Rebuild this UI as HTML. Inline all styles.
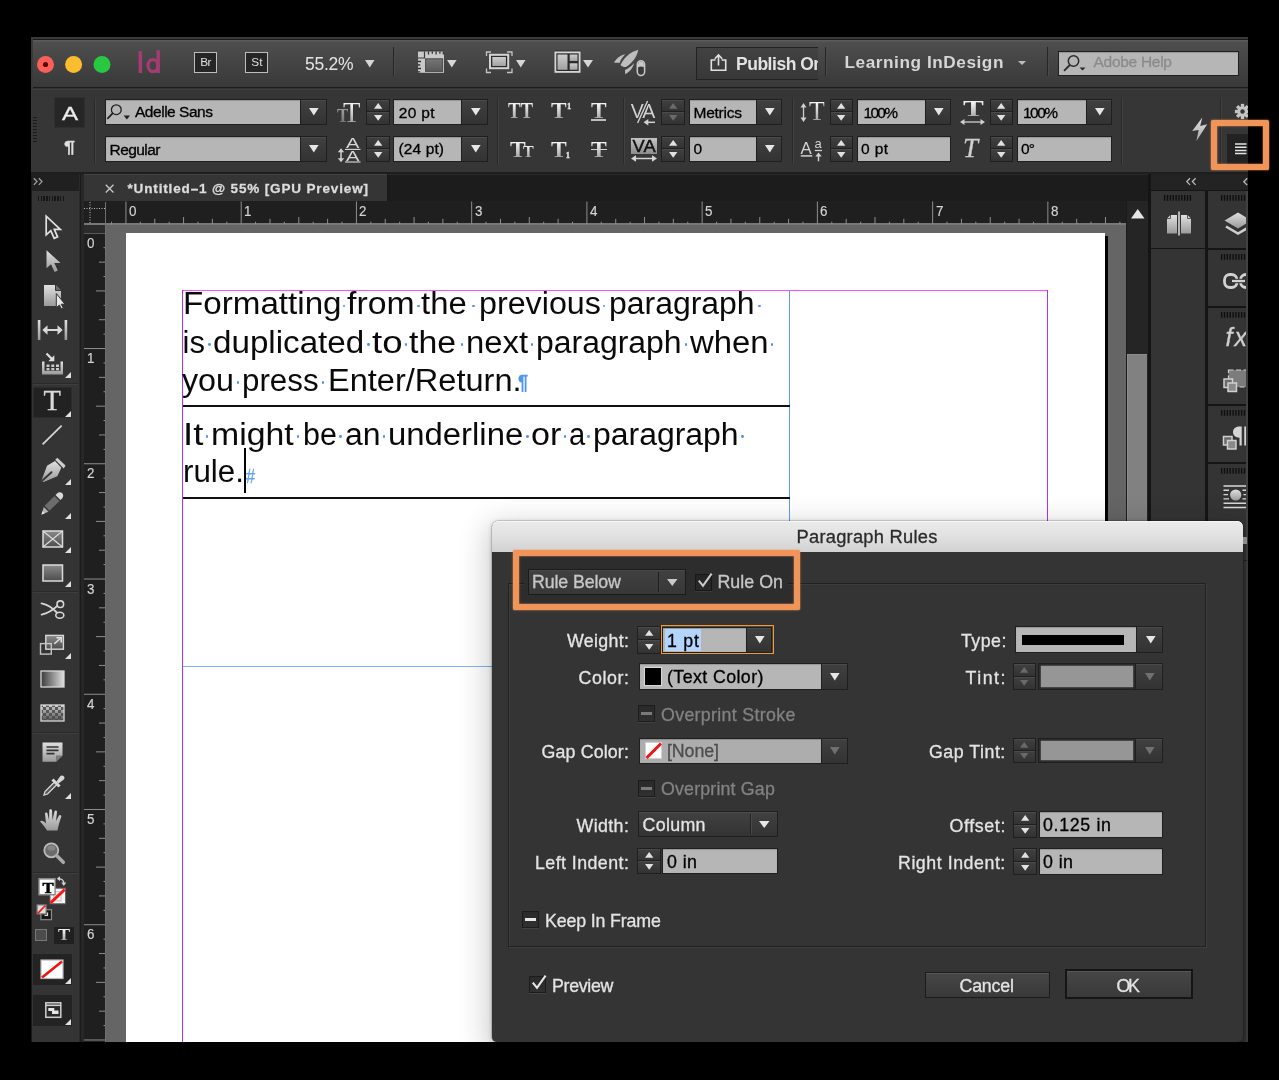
<!DOCTYPE html><html><head><meta charset="utf-8"><title>InDesign</title><style>html,body{margin:0;padding:0}body{width:1279px;height:1080px;background:#000;position:relative;overflow:hidden;font-family:"Liberation Sans",sans-serif;}div,span,svg{position:absolute;display:block}svg{overflow:visible}span{-webkit-text-stroke:0.300px}</style></head><body><div id="root" style="left:0;top:0;width:1279px;height:1080px;will-change:transform;"><div style="left:31px;top:37px;width:1217px;height:1005.4px;background:#333333;"></div><div style="left:31px;top:36.8px;width:1217px;height:51.2px;background:linear-gradient(#3a3a3a 0,#3a3a3a 1.700px,#1c1c1c 1.700px,#1c1c1c 3.400px,#5c5c5c 3.400px,#4e4e4e 5.400px,#444444 50%,#383838 100%);"></div><div style="left:31px;top:36.8px;width:1.7px;height:51.2px;background:#3a3a3a;"></div><div style="left:32.7px;top:86.7px;width:1215.3px;height:1.8px;background:#1c1c1c;"></div><svg style="left:34px;top:52px;" width="82" height="26" viewBox="0 0 82 26"><circle cx="11.5" cy="12.5" r="8.5" fill="#fc5f58"/><circle cx="11.5" cy="12.5" r="2.6" fill="#5a0805"/><circle cx="39.6" cy="12.5" r="8.5" fill="#fdbc2e"/><circle cx="68" cy="12.5" r="8.5" fill="#28c840"/></svg><svg style="left:136px;top:46.7px;" width="28" height="30" viewBox="0 0 28 30"><rect x="2.6" y="4" width="3.5" height="22" fill="#a63a72"/><rect x="20.4" y="3.2" width="3.5" height="22.8" fill="#a63a72"/><ellipse cx="17" cy="18.6" rx="5" ry="6" fill="none" stroke="#a63a72" stroke-width="3.3"/></svg><div style="left:194px;top:52px;width:23px;height:21px;background:#262626;border:1px solid #bdbdbd;box-sizing:border-box;"></div><span style="left:200.3px;top:57.31px;font-size:11.8px;line-height:11.8px;color:#e0e0e0;white-space:pre;letter-spacing:-0.6px;-webkit-text-stroke:0;">Br</span><div style="left:245px;top:52px;width:23px;height:21px;background:#262626;border:1px solid #bdbdbd;box-sizing:border-box;"></div><span style="left:251.3px;top:57.31px;font-size:11.8px;line-height:11.8px;color:#e0e0e0;white-space:pre;letter-spacing:0.05px;-webkit-text-stroke:0;">St</span><span style="left:305px;top:55.99px;font-size:17.5px;line-height:17.5px;color:#e4e4e4;white-space:pre;letter-spacing:-0.28px;-webkit-text-stroke:0;">55.2%</span><svg style="left:365px;top:59.5px;" width="9.5" height="7.5" viewBox="0 0 9.5 7.5"><path d="M0 0H9.5 L4.75 7.5Z" fill="#d6d6d6"/></svg><div style="left:393px;top:47px;width:1px;height:29px;background:#262626;"></div><div style="left:394px;top:47px;width:1px;height:29px;background:#4a4a4a;"></div><svg style="left:417px;top:50px;" width="28" height="24" viewBox="0 0 28 24"><defs><linearGradient id="gA" x1="0" y1="0" x2="0" y2="1"><stop offset="0" stop-color="#767676"/><stop offset="1" stop-color="#595959"/></linearGradient><linearGradient id="gB" x1="0" y1="0" x2="0" y2="1"><stop offset="0" stop-color="#cdcdcd"/><stop offset="1" stop-color="#a2a2a2"/></linearGradient></defs><rect x="1" y="0.500" width="26" height="1" fill="#2c2c2c"/><rect x="1" y="1.500" width="26" height="21.300" fill="#c9c9c9"/><rect x="8.600" y="8.800" width="17" height="12.600" fill="url(#gA)" stroke="#4a4a4a" stroke-width="1"/><path d="M1 8h6.500V1.500" fill="none" stroke="#3a3a3a" stroke-width="1.200"/><path d="M11.500 1.500v3M15.300 1.500v2.200M19.100 1.500v3M22.900 1.500v2.200M26.300 1.500v3" stroke="#333" stroke-width="1.300"/><path d="M1 11.500h3M1 15h2.200M1 18.500h3M1 21.800h2.200" stroke="#333" stroke-width="1.300"/></svg><svg style="left:447px;top:59.5px;" width="9.6" height="7.5" viewBox="0 0 9.6 7.5"><path d="M0 0H9.6 L4.8 7.5Z" fill="#d6d6d6"/></svg><svg style="left:485px;top:50px;" width="29" height="24" viewBox="0 0 29 24"><path d="M1.500 6V2H6M22 2h5V6M27 18.500v4H22M6 22.500H1.500v-4" fill="none" stroke="#c4c4c4" stroke-width="1.300"/><rect x="4" y="3.800" width="20.200" height="15.400" fill="#d4d4d4"/><rect x="6" y="5.800" width="16.200" height="11.400" fill="#2b2b2b"/><rect x="7.300" y="7" width="13.600" height="9" fill="url(#gB)"/></svg><svg style="left:515.5px;top:59.5px;" width="9.5" height="7.5" viewBox="0 0 9.5 7.5"><path d="M0 0H9.5 L4.75 7.5Z" fill="#d6d6d6"/></svg><svg style="left:553.5px;top:50px;" width="27" height="24" viewBox="0 0 27 24"><rect x="0.500" y="0.500" width="26" height="1" fill="#2c2c2c"/><rect x="0.500" y="1.500" width="26" height="21.300" fill="#d6d6d6"/><rect x="2.300" y="3.300" width="22.400" height="17.700" fill="#2b2b2b"/><rect x="3.500" y="4.500" width="10" height="15.300" fill="url(#gB)"/><rect x="15.700" y="4.500" width="7.800" height="6.500" fill="url(#gB)"/><rect x="15.700" y="13.300" width="7.800" height="6.500" fill="url(#gB)"/></svg><svg style="left:582.5px;top:59.5px;" width="10" height="7.5" viewBox="0 0 10 7.5"><path d="M0 0H10 L5 7.5Z" fill="#d6d6d6"/></svg><svg style="left:612px;top:48px;" width="36" height="30" viewBox="0 0 36 30"><g fill="#bdbdbd"><path d="M26.200 1.800C19 4 12.500 8.500 8.500 17C10 18.500 12 19.200 14 19C20 15.500 25 9 26.200 1.800Z"/><path d="M2 14.800C4 11 7.500 7.500 13.200 6.200C10.500 9 8.500 12 7.500 15C5.500 14.600 3.500 14.600 2 14.800Z"/><path d="M13 22L13.200 26.300C17.500 24 21 20 22.200 15C19.500 18 16.500 20.500 13 22Z"/></g><rect x="25.300" y="12.700" width="7.300" height="14.800" rx="3.650" fill="#3a3a3a" stroke="#c8c8c8" stroke-width="1.500"/><path d="M26 19.300V16.400a2.950 2.950 0 0 1 5.900 0V19.300Q29 17.800 26 19.300Z" fill="#c8c8c8"/></svg><div style="left:696px;top:47px;width:121.5px;height:32.5px;background:linear-gradient(#424242,#383838);border:1px solid #222;border-right:none;box-sizing:border-box;overflow:hidden;"></div><svg style="left:708.5px;top:52px;" width="20" height="20" viewBox="0 0 20 20"><path d="M6.500 8H2.300v10.300h14.400V8h-4.200" fill="none" stroke="#e2e2e2" stroke-width="1.600"/><path d="M9.500 13.500V3.500M5.800 6.800L9.500 3l3.700 3.800" fill="none" stroke="#e2e2e2" stroke-width="1.600"/></svg><div style="left:736px;top:47px;width:81.500px;height:32.500px;overflow:hidden;"><span style="left:0px;top:9.19px;font-size:17.5px;line-height:17.5px;color:#e2e2e2;white-space:pre;font-weight:bold;letter-spacing:-0.48px;-webkit-text-stroke:0;">Publish On</span></div><div style="left:825px;top:47px;width:1px;height:29px;background:#262626;"></div><div style="left:826px;top:47px;width:1px;height:29px;background:#4a4a4a;"></div><span style="left:844.5px;top:54.24px;font-size:17.2px;line-height:17.2px;color:#d6d6d6;white-space:pre;font-weight:bold;letter-spacing:0.56px;-webkit-text-stroke:0;">Learning InDesign</span><svg style="left:1017.5px;top:60.5px;" width="8" height="4" viewBox="0 0 8 4"><path d="M0 0H8 L4 4Z" fill="#bdbdbd"/></svg><div style="left:1047px;top:47px;width:1px;height:29px;background:#262626;"></div><div style="left:1048px;top:47px;width:1px;height:29px;background:#4a4a4a;"></div><div style="left:1058px;top:50.5px;width:180.5px;height:25px;background:#b6b6b6;border:1px solid #1f1f1f;box-sizing:border-box;box-shadow:inset 0 1px 1px rgba(0,0,0,.18);"></div><svg style="left:1062px;top:53px;" width="24" height="20" viewBox="0 0 24 20"><circle cx="11.500" cy="8" r="5.200" fill="none" stroke="#2a2a2a" stroke-width="1.500"/><path d="M7.800 12L2 17.800" stroke="#2a2a2a" stroke-width="1.800"/><path d="M17.500 14.500h6l-3 3z" fill="#2a2a2a"/></svg><span style="left:1093.5px;top:54.38px;font-size:15.5px;line-height:15.5px;color:#8b8b8b;white-space:pre;letter-spacing:-0.28px;">Adobe Help</span><div style="left:31px;top:88.5px;width:1217px;height:84px;background:linear-gradient(#404040 0,#404040 1px,#363636 1px);"></div><div style="left:31px;top:172px;width:1217px;height:2px;background:#1e1e1e;"></div><div style="left:33px;top:117px;width:4px;height:26px;background:repeating-linear-gradient(#1c1c1c 0,#1c1c1c 1.500px,transparent 1.500px,transparent 3px);"></div><div style="left:54px;top:97px;width:31px;height:30.5px;background:#262626;box-shadow:inset 0 0 0 1px #2f2f2f;"></div><span style="left:62px;top:103.75px;font-size:19.2px;line-height:19.2px;color:#ececec;white-space:pre;transform:scaleX(1.26);transform-origin:0 0;">A</span><span style="left:63.5px;top:138.53px;font-size:16.5px;line-height:16.5px;color:#dedede;white-space:pre;font-weight:bold;transform:scaleX(1.2);transform-origin:0 0;">¶</span><div style="left:94px;top:97.5px;width:1px;height:66.5px;background:#2a2a2a;"></div><div style="left:95px;top:97.5px;width:1px;height:66.5px;background:#414141;"></div><div style="left:104.5px;top:99px;width:196.5px;height:25.8px;background:#b6b6b6;border:1px solid #1f1f1f;box-sizing:border-box;box-shadow:inset 0 1px 1px rgba(0,0,0,.18);"></div><div style="left:300px;top:99px;width:26.5px;height:25.8px;background:linear-gradient(#404040,#333333);border:1px solid #1f1f1f;box-sizing:border-box;box-shadow:inset 0 1px 0 rgba(255,255,255,.06);"></div><svg style="left:309.25px;top:108.3px;" width="9.6" height="7.5" viewBox="0 0 9.6 7.5"><path d="M0 0H9.6 L4.8 7.5Z" fill="#e6e6e6"/></svg><svg style="left:106px;top:101px;" width="26" height="22" viewBox="0 0 26 22"><circle cx="10.300" cy="8.700" r="4.900" fill="none" stroke="#1f1f1f" stroke-width="1.300"/><path d="M6.800 12.200L1.300 17.800" stroke="#1f1f1f" stroke-width="1.700"/><path d="M17.700 14.600h6.300l-3.150 3.800z" fill="#1f1f1f"/></svg><span style="left:135px;top:103.88px;font-size:15.5px;line-height:15.5px;color:#000;white-space:pre;letter-spacing:-0.47px;">Adelle Sans</span><div style="left:104.5px;top:135.5px;width:196.5px;height:26px;background:#b6b6b6;border:1px solid #1f1f1f;box-sizing:border-box;box-shadow:inset 0 1px 1px rgba(0,0,0,.18);"></div><div style="left:300px;top:135.5px;width:26.5px;height:26px;background:linear-gradient(#404040,#333333);border:1px solid #1f1f1f;box-sizing:border-box;box-shadow:inset 0 1px 0 rgba(255,255,255,.06);"></div><svg style="left:309.25px;top:144.9px;" width="9.6" height="7.5" viewBox="0 0 9.6 7.5"><path d="M0 0H9.6 L4.8 7.5Z" fill="#e6e6e6"/></svg><span style="left:109.5px;top:141.68px;font-size:15.5px;line-height:15.5px;color:#000;white-space:pre;letter-spacing:-0.55px;">Regular</span><span style="left:336.8px;top:107.23px;font-size:18.47px;line-height:18.47px;color:transparent;white-space:pre;font-family:'Liberation Serif';font-weight:bold;transform:scaleX(0.95);transform-origin:0 0;background:linear-gradient(#9a9a9a 25%,#6e6e6e 85%);-webkit-background-clip:text;background-clip:text;-webkit-text-stroke:0;padding:2px 0;margin-top:-2px;">T</span><span style="left:343px;top:98.41px;font-size:29.01px;line-height:29.01px;color:transparent;white-space:pre;font-family:'Liberation Serif';transform:scaleX(0.98);transform-origin:0 0;background:linear-gradient(#f2f2f2 25%,#9c9c9c 85%);-webkit-background-clip:text;background-clip:text;-webkit-text-stroke:0;padding:2px 0;margin-top:-2px;">T</span><div style="left:366px;top:99px;width:24px;height:13.4px;background:linear-gradient(#404040,#333333);border:1px solid #1f1f1f;box-sizing:border-box;box-shadow:inset 0 1px 0 rgba(255,255,255,.06);"></div><div style="left:366px;top:111.4px;width:24px;height:13.4px;background:linear-gradient(#404040,#333333);border:1px solid #1f1f1f;box-sizing:border-box;box-shadow:inset 0 1px 0 rgba(255,255,255,.06);"></div><svg style="left:373.8px;top:103.3px;" width="8.4" height="5.7" viewBox="0 0 8.4 5.7"><path d="M0 5.7 H8.4 L4.2 0Z" fill="#e2e2e2"/></svg><svg style="left:373.8px;top:114.8px;" width="8.4" height="5.7" viewBox="0 0 8.4 5.7"><path d="M0 0H8.4 L4.2 5.7Z" fill="#e2e2e2"/></svg><div style="left:393px;top:99px;width:69px;height:25.8px;background:#b6b6b6;border:1px solid #1f1f1f;box-sizing:border-box;box-shadow:inset 0 1px 1px rgba(0,0,0,.18);"></div><div style="left:461px;top:99px;width:27px;height:25.8px;background:linear-gradient(#404040,#333333);border:1px solid #1f1f1f;box-sizing:border-box;box-shadow:inset 0 1px 0 rgba(255,255,255,.06);"></div><svg style="left:470.5px;top:108.3px;" width="9.6" height="7.5" viewBox="0 0 9.6 7.5"><path d="M0 0H9.6 L4.8 7.5Z" fill="#e6e6e6"/></svg><span style="left:398.8px;top:104.88px;font-size:15.5px;line-height:15.5px;color:#000;white-space:pre;letter-spacing:0.31px;">20 pt</span><svg style="left:336px;top:136px;" width="26" height="28" viewBox="0 0 26 28"><path d="M5 14.500v10" stroke="#cfcfcf" stroke-width="1.500"/><path d="M1.800 16.300l3.200-4 3.200 4zM1.800 22.300l3.200 4 3.200-4z" fill="#cfcfcf"/><text x="10" y="12.400" font-family="Liberation Sans" font-size="14.800" fill="#d6d6d6" textLength="13.400" lengthAdjust="spacingAndGlyphs">A</text><path d="M9 13.400h15.500" stroke="#cfcfcf" stroke-width="1.200"/><text x="10" y="25" font-family="Liberation Sans" font-size="14.800" fill="#d6d6d6" textLength="13.400" lengthAdjust="spacingAndGlyphs">A</text><path d="M9 26h15.500" stroke="#cfcfcf" stroke-width="1.200"/></svg><div style="left:366px;top:135.5px;width:24px;height:13.5px;background:linear-gradient(#404040,#333333);border:1px solid #1f1f1f;box-sizing:border-box;box-shadow:inset 0 1px 0 rgba(255,255,255,.06);"></div><div style="left:366px;top:148px;width:24px;height:13.5px;background:linear-gradient(#404040,#333333);border:1px solid #1f1f1f;box-sizing:border-box;box-shadow:inset 0 1px 0 rgba(255,255,255,.06);"></div><svg style="left:373.8px;top:139.8px;" width="8.4" height="5.7" viewBox="0 0 8.4 5.7"><path d="M0 5.7 H8.4 L4.2 0Z" fill="#e2e2e2"/></svg><svg style="left:373.8px;top:151.5px;" width="8.4" height="5.7" viewBox="0 0 8.4 5.7"><path d="M0 0H8.4 L4.2 5.7Z" fill="#e2e2e2"/></svg><div style="left:393px;top:135.5px;width:69px;height:26px;background:#b6b6b6;border:1px solid #1f1f1f;box-sizing:border-box;box-shadow:inset 0 1px 1px rgba(0,0,0,.18);"></div><div style="left:461px;top:135.5px;width:27px;height:26px;background:linear-gradient(#404040,#333333);border:1px solid #1f1f1f;box-sizing:border-box;box-shadow:inset 0 1px 0 rgba(255,255,255,.06);"></div><svg style="left:470.5px;top:144.9px;" width="9.6" height="7.5" viewBox="0 0 9.6 7.5"><path d="M0 0H9.6 L4.8 7.5Z" fill="#e6e6e6"/></svg><span style="left:398.5px;top:141.38px;font-size:15.5px;line-height:15.5px;color:#000;white-space:pre;letter-spacing:0.12px;">(24 pt)</span><div style="left:497px;top:97.5px;width:1px;height:66.5px;background:#2a2a2a;"></div><div style="left:498px;top:97.5px;width:1px;height:66.5px;background:#414141;"></div><span style="left:508.3px;top:99.55px;font-size:22.75px;line-height:22.75px;color:transparent;white-space:pre;font-family:'Liberation Serif';font-weight:bold;transform:scaleX(0.83);transform-origin:0 0;background:linear-gradient(#f2f2f2 25%,#9c9c9c 85%);-webkit-background-clip:text;background-clip:text;-webkit-text-stroke:0;padding:2px 0;margin-top:-2px;">TT</span><span style="left:551px;top:99.55px;font-size:22.75px;line-height:22.75px;color:transparent;white-space:pre;font-family:'Liberation Serif';font-weight:bold;transform:scaleX(1.04);transform-origin:0 0;background:linear-gradient(#f2f2f2 25%,#9c9c9c 85%);-webkit-background-clip:text;background-clip:text;-webkit-text-stroke:0;padding:2px 0;margin-top:-2px;">T</span><span style="left:567px;top:101.58px;font-size:8.5px;line-height:8.5px;color:#e8e8e8;white-space:pre;font-family:'Liberation Serif';font-weight:bold;">1</span><span style="left:590.7px;top:99.66px;font-size:22.14px;line-height:22.14px;color:transparent;white-space:pre;font-family:'Liberation Serif';font-weight:bold;transform:scaleX(1.06);transform-origin:0 0;background:linear-gradient(#f2f2f2 25%,#9c9c9c 85%);-webkit-background-clip:text;background-clip:text;-webkit-text-stroke:0;padding:2px 0;margin-top:-2px;">T</span><div style="left:590.7px;top:119.3px;width:15.7px;height:1.7px;background:#bdbdbd;"></div><span style="left:509.7px;top:137.64px;font-size:23.36px;line-height:23.36px;color:transparent;white-space:pre;font-family:'Liberation Serif';font-weight:bold;transform:scaleX(1.01);transform-origin:0 0;background:linear-gradient(#f2f2f2 25%,#9c9c9c 85%);-webkit-background-clip:text;background-clip:text;-webkit-text-stroke:0;padding:2px 0;margin-top:-2px;">T</span><span style="left:522.8px;top:142.75px;font-size:17.25px;line-height:17.25px;color:transparent;white-space:pre;font-family:'Liberation Serif';font-weight:bold;transform:scaleX(0.93);transform-origin:0 0;background:linear-gradient(#f2f2f2 25%,#9c9c9c 85%);-webkit-background-clip:text;background-clip:text;-webkit-text-stroke:0;padding:2px 0;margin-top:-2px;">T</span><span style="left:551px;top:137.64px;font-size:23.36px;line-height:23.36px;color:transparent;white-space:pre;font-family:'Liberation Serif';font-weight:bold;transform:scaleX(1.01);transform-origin:0 0;background:linear-gradient(#f2f2f2 25%,#9c9c9c 85%);-webkit-background-clip:text;background-clip:text;-webkit-text-stroke:0;padding:2px 0;margin-top:-2px;">T</span><span style="left:565.8px;top:150.68px;font-size:8.5px;line-height:8.5px;color:#e8e8e8;white-space:pre;font-family:'Liberation Serif';font-weight:bold;">1</span><span style="left:590.7px;top:137.64px;font-size:23.36px;line-height:23.36px;color:transparent;white-space:pre;font-family:'Liberation Serif';font-weight:bold;transform:scaleX(1.01);transform-origin:0 0;background:linear-gradient(#f2f2f2 25%,#9c9c9c 85%);-webkit-background-clip:text;background-clip:text;-webkit-text-stroke:0;padding:2px 0;margin-top:-2px;">T</span><div style="left:590.5px;top:148.6px;width:16.1px;height:1.9px;background:#d2d2d2;"></div><div style="left:623px;top:97.5px;width:1px;height:66.5px;background:#2a2a2a;"></div><div style="left:624px;top:97.5px;width:1px;height:66.5px;background:#414141;"></div><svg style="left:629px;top:98px;" width="30" height="28" viewBox="0 0 30 28"><text x="1.800" y="20" font-family="Liberation Sans" font-size="19.500" fill="#d2d2d2">V</text><text x="13.200" y="20" font-family="Liberation Sans" font-size="19.500" fill="#d2d2d2">A</text><path d="M8.600 25L18.600 3" stroke="#363636" stroke-width="3.400"/><path d="M8.600 25L18.600 3" stroke="#d2d2d2" stroke-width="1.400"/><path d="M16.500 24.300h9.500" stroke="#d2d2d2" stroke-width="1.500"/><path d="M19.300 21L14.500 24.300l4.800 3.300z" fill="#d2d2d2"/></svg><div style="left:661px;top:99px;width:23.5px;height:13.4px;background:linear-gradient(#404040,#333333);border:1px solid #1f1f1f;box-sizing:border-box;box-shadow:inset 0 1px 0 rgba(255,255,255,.06);"></div><div style="left:661px;top:111.4px;width:23.5px;height:13.4px;background:linear-gradient(#404040,#333333);border:1px solid #1f1f1f;box-sizing:border-box;box-shadow:inset 0 1px 0 rgba(255,255,255,.06);"></div><svg style="left:668.55px;top:103.3px;" width="8.4" height="5.7" viewBox="0 0 8.4 5.7"><path d="M0 5.7 H8.4 L4.2 0Z" fill="#6a6a6a"/></svg><svg style="left:668.55px;top:114.8px;" width="8.4" height="5.7" viewBox="0 0 8.4 5.7"><path d="M0 0H8.4 L4.2 5.7Z" fill="#6a6a6a"/></svg><div style="left:688.5px;top:99px;width:68.5px;height:25.8px;background:#b6b6b6;border:1px solid #1f1f1f;box-sizing:border-box;box-shadow:inset 0 1px 1px rgba(0,0,0,.18);"></div><div style="left:756px;top:99px;width:26px;height:25.8px;background:linear-gradient(#404040,#333333);border:1px solid #1f1f1f;box-sizing:border-box;box-shadow:inset 0 1px 0 rgba(255,255,255,.06);"></div><svg style="left:765px;top:108.3px;" width="9.6" height="7.5" viewBox="0 0 9.6 7.5"><path d="M0 0H9.6 L4.8 7.5Z" fill="#e6e6e6"/></svg><span style="left:693.5px;top:104.88px;font-size:15.5px;line-height:15.5px;color:#000;white-space:pre;letter-spacing:-0.24px;">Metrics</span><div style="left:631px;top:138px;width:26px;height:15.8px;background:linear-gradient(#c4c4c4,#8c8c8c);"></div><svg style="left:629px;top:136px;" width="30" height="28" viewBox="0 0 30 28"><text x="3.600" y="16.100" font-family="Liberation Sans" font-size="16.400" fill="#111" stroke="#111" stroke-width="0.400" textLength="23" lengthAdjust="spacingAndGlyphs">VA</text><path d="M5 22.500h20" stroke="#d4d4d4" stroke-width="1.500"/><path d="M7 19.300L2 22.500 7 25.700zM23 19.300l5 3.200-5 3.200z" fill="#d4d4d4"/></svg><div style="left:661px;top:135.5px;width:23.5px;height:13.5px;background:linear-gradient(#404040,#333333);border:1px solid #1f1f1f;box-sizing:border-box;box-shadow:inset 0 1px 0 rgba(255,255,255,.06);"></div><div style="left:661px;top:148px;width:23.5px;height:13.5px;background:linear-gradient(#404040,#333333);border:1px solid #1f1f1f;box-sizing:border-box;box-shadow:inset 0 1px 0 rgba(255,255,255,.06);"></div><svg style="left:668.55px;top:139.8px;" width="8.4" height="5.7" viewBox="0 0 8.4 5.7"><path d="M0 5.7 H8.4 L4.2 0Z" fill="#e2e2e2"/></svg><svg style="left:668.55px;top:151.5px;" width="8.4" height="5.7" viewBox="0 0 8.4 5.7"><path d="M0 0H8.4 L4.2 5.7Z" fill="#e2e2e2"/></svg><div style="left:688.5px;top:135.5px;width:68.5px;height:26px;background:#b6b6b6;border:1px solid #1f1f1f;box-sizing:border-box;box-shadow:inset 0 1px 1px rgba(0,0,0,.18);"></div><div style="left:756px;top:135.5px;width:26px;height:26px;background:linear-gradient(#404040,#333333);border:1px solid #1f1f1f;box-sizing:border-box;box-shadow:inset 0 1px 0 rgba(255,255,255,.06);"></div><svg style="left:765px;top:144.9px;" width="9.6" height="7.5" viewBox="0 0 9.6 7.5"><path d="M0 0H9.6 L4.8 7.5Z" fill="#e6e6e6"/></svg><span style="left:693.5px;top:141.38px;font-size:15.5px;line-height:15.5px;color:#000;white-space:pre;">0</span><div style="left:791.5px;top:97.5px;width:1px;height:66.5px;background:#2a2a2a;"></div><div style="left:792.5px;top:97.5px;width:1px;height:66.5px;background:#414141;"></div><svg style="left:798px;top:100px;" width="12" height="26" viewBox="0 0 12 26"><path d="M5.500 5.500v14" stroke="#cfcfcf" stroke-width="1.300"/><path d="M2.500 7.500l3-4.500 3 4.500zM2.500 17.500l3 4.500 3-4.500z" fill="#cfcfcf"/></svg><span style="left:808.5px;top:98.3px;font-size:26.87px;line-height:26.87px;color:transparent;white-space:pre;font-family:'Liberation Serif';transform:scaleX(0.97);transform-origin:0 0;background:linear-gradient(#f2f2f2 25%,#9c9c9c 85%);-webkit-background-clip:text;background-clip:text;-webkit-text-stroke:0;padding:2px 0;margin-top:-2px;">T</span><div style="left:830px;top:99px;width:23px;height:13.4px;background:linear-gradient(#404040,#333333);border:1px solid #1f1f1f;box-sizing:border-box;box-shadow:inset 0 1px 0 rgba(255,255,255,.06);"></div><div style="left:830px;top:111.4px;width:23px;height:13.4px;background:linear-gradient(#404040,#333333);border:1px solid #1f1f1f;box-sizing:border-box;box-shadow:inset 0 1px 0 rgba(255,255,255,.06);"></div><svg style="left:837.3px;top:103.3px;" width="8.4" height="5.7" viewBox="0 0 8.4 5.7"><path d="M0 5.7 H8.4 L4.2 0Z" fill="#e2e2e2"/></svg><svg style="left:837.3px;top:114.8px;" width="8.4" height="5.7" viewBox="0 0 8.4 5.7"><path d="M0 0H8.4 L4.2 5.7Z" fill="#e2e2e2"/></svg><div style="left:857px;top:99px;width:69px;height:25.8px;background:#b6b6b6;border:1px solid #1f1f1f;box-sizing:border-box;box-shadow:inset 0 1px 1px rgba(0,0,0,.18);"></div><div style="left:925px;top:99px;width:26px;height:25.8px;background:linear-gradient(#404040,#333333);border:1px solid #1f1f1f;box-sizing:border-box;box-shadow:inset 0 1px 0 rgba(255,255,255,.06);"></div><svg style="left:934px;top:108.3px;" width="9.6" height="7.5" viewBox="0 0 9.6 7.5"><path d="M0 0H9.6 L4.8 7.5Z" fill="#e6e6e6"/></svg><span style="left:863.5px;top:104.88px;font-size:15.5px;line-height:15.5px;color:#000;white-space:pre;letter-spacing:-1.71px;">100%</span><svg style="left:798px;top:138px;" width="28" height="26" viewBox="0 0 28 26"><text x="2.600" y="15.500" font-family="Liberation Sans" font-size="16.800" fill="#d2d2d2">A</text><path d="M2.800 17.900h11.500" stroke="#d2d2d2" stroke-width="1.500"/><text x="16.600" y="9.800" font-family="Liberation Sans" font-size="13" fill="#d2d2d2">a</text><path d="M16.800 12.500h7.200" stroke="#d2d2d2" stroke-width="1.300"/><path d="M20.500 17v6.300" stroke="#d2d2d2" stroke-width="1.400"/><path d="M17.300 18.500l3.200-4 3.200 4z" fill="#d2d2d2"/></svg><div style="left:830px;top:135.5px;width:23px;height:13.5px;background:linear-gradient(#404040,#333333);border:1px solid #1f1f1f;box-sizing:border-box;box-shadow:inset 0 1px 0 rgba(255,255,255,.06);"></div><div style="left:830px;top:148px;width:23px;height:13.5px;background:linear-gradient(#404040,#333333);border:1px solid #1f1f1f;box-sizing:border-box;box-shadow:inset 0 1px 0 rgba(255,255,255,.06);"></div><svg style="left:837.3px;top:139.8px;" width="8.4" height="5.7" viewBox="0 0 8.4 5.7"><path d="M0 5.7 H8.4 L4.2 0Z" fill="#e2e2e2"/></svg><svg style="left:837.3px;top:151.5px;" width="8.4" height="5.7" viewBox="0 0 8.4 5.7"><path d="M0 0H8.4 L4.2 5.7Z" fill="#e2e2e2"/></svg><div style="left:857px;top:135.5px;width:94px;height:26px;background:#b6b6b6;border:1px solid #1f1f1f;box-sizing:border-box;box-shadow:inset 0 1px 1px rgba(0,0,0,.18);"></div><span style="left:861px;top:140.88px;font-size:15.5px;line-height:15.5px;color:#000;white-space:pre;letter-spacing:0.38px;">0 pt</span><span style="left:962.5px;top:97.75px;font-size:22.75px;line-height:22.75px;color:transparent;white-space:pre;font-family:'Liberation Serif';font-weight:bold;transform:scaleX(1.38);transform-origin:0 0;background:linear-gradient(#f2f2f2 25%,#9c9c9c 85%);-webkit-background-clip:text;background-clip:text;-webkit-text-stroke:0;padding:2px 0;margin-top:-2px;">T</span><svg style="left:958px;top:117px;" width="30" height="10" viewBox="0 0 30 10"><path d="M5 5h19" stroke="#cfcfcf" stroke-width="1.300"/><path d="M6.500 2L2 5l4.500 3zM22.500 2l4.500 3-4.500 3z" fill="#cfcfcf"/></svg><div style="left:990px;top:99px;width:23px;height:13.4px;background:linear-gradient(#404040,#333333);border:1px solid #1f1f1f;box-sizing:border-box;box-shadow:inset 0 1px 0 rgba(255,255,255,.06);"></div><div style="left:990px;top:111.4px;width:23px;height:13.4px;background:linear-gradient(#404040,#333333);border:1px solid #1f1f1f;box-sizing:border-box;box-shadow:inset 0 1px 0 rgba(255,255,255,.06);"></div><svg style="left:997.3px;top:103.3px;" width="8.4" height="5.7" viewBox="0 0 8.4 5.7"><path d="M0 5.7 H8.4 L4.2 0Z" fill="#e2e2e2"/></svg><svg style="left:997.3px;top:114.8px;" width="8.4" height="5.7" viewBox="0 0 8.4 5.7"><path d="M0 0H8.4 L4.2 5.7Z" fill="#e2e2e2"/></svg><div style="left:1017px;top:99px;width:69.5px;height:25.8px;background:#b6b6b6;border:1px solid #1f1f1f;box-sizing:border-box;box-shadow:inset 0 1px 1px rgba(0,0,0,.18);"></div><div style="left:1085.5px;top:99px;width:26px;height:25.8px;background:linear-gradient(#404040,#333333);border:1px solid #1f1f1f;box-sizing:border-box;box-shadow:inset 0 1px 0 rgba(255,255,255,.06);"></div><svg style="left:1094.5px;top:108.3px;" width="9.6" height="7.5" viewBox="0 0 9.6 7.5"><path d="M0 0H9.6 L4.8 7.5Z" fill="#e6e6e6"/></svg><span style="left:1023px;top:104.88px;font-size:15.5px;line-height:15.5px;color:#000;white-space:pre;letter-spacing:-1.55px;">100%</span><span style="left:963px;top:135.39px;font-size:27px;line-height:27px;color:#cfcfcf;white-space:pre;font-family:'Liberation Serif';font-style:italic;letter-spacing:4.98px;">T</span><div style="left:990px;top:135.5px;width:23px;height:13.5px;background:linear-gradient(#404040,#333333);border:1px solid #1f1f1f;box-sizing:border-box;box-shadow:inset 0 1px 0 rgba(255,255,255,.06);"></div><div style="left:990px;top:148px;width:23px;height:13.5px;background:linear-gradient(#404040,#333333);border:1px solid #1f1f1f;box-sizing:border-box;box-shadow:inset 0 1px 0 rgba(255,255,255,.06);"></div><svg style="left:997.3px;top:139.8px;" width="8.4" height="5.7" viewBox="0 0 8.4 5.7"><path d="M0 5.7 H8.4 L4.2 0Z" fill="#e2e2e2"/></svg><svg style="left:997.3px;top:151.5px;" width="8.4" height="5.7" viewBox="0 0 8.4 5.7"><path d="M0 0H8.4 L4.2 5.7Z" fill="#e2e2e2"/></svg><div style="left:1017px;top:135.5px;width:94.5px;height:26px;background:#b6b6b6;border:1px solid #1f1f1f;box-sizing:border-box;box-shadow:inset 0 1px 1px rgba(0,0,0,.18);"></div><span style="left:1021px;top:140.88px;font-size:15.5px;line-height:15.5px;color:#000;white-space:pre;letter-spacing:-0.82px;">0°</span><div style="left:1120.5px;top:97.5px;width:1px;height:66.5px;background:#2a2a2a;"></div><div style="left:1121.5px;top:97.5px;width:1px;height:66.5px;background:#414141;"></div><div style="left:1220.3px;top:97.5px;width:1px;height:66.5px;background:#2a2a2a;"></div><div style="left:1221.3px;top:97.5px;width:1px;height:66.5px;background:#414141;"></div><svg style="left:1190px;top:115px;" width="20" height="28" viewBox="0 0 20 28"><defs><linearGradient id="lg" x1="0" y1="0" x2="0" y2="1"><stop offset="0" stop-color="#e2e2e2"/><stop offset="1" stop-color="#a8a8a8"/></linearGradient></defs><path d="M12.300 2.600L2.200 16l6.500-1.100L6.300 26.300 17.200 9.200l-7 1.800z" fill="url(#lg)"/></svg><div style="left:1232px;top:102px;width:16px;height:18px;overflow:hidden;"><svg style="left:1.5px;top:0.8px;" width="17" height="17" viewBox="0 0 17 17"><g transform="translate(8.500 8.500) scale(0.930)"><g fill="#c4c4c4"><rect x="-1.800" y="-8.200" width="3.600" height="5" transform="rotate(0)"/><rect x="-1.800" y="-8.200" width="3.600" height="5" transform="rotate(45)"/><rect x="-1.800" y="-8.200" width="3.600" height="5" transform="rotate(90)"/><rect x="-1.800" y="-8.200" width="3.600" height="5" transform="rotate(135)"/><rect x="-1.800" y="-8.200" width="3.600" height="5" transform="rotate(180)"/><rect x="-1.800" y="-8.200" width="3.600" height="5" transform="rotate(225)"/><rect x="-1.800" y="-8.200" width="3.600" height="5" transform="rotate(270)"/><rect x="-1.800" y="-8.200" width="3.600" height="5" transform="rotate(315)"/></g><circle r="5.600" fill="#c4c4c4"/><circle r="2.400" fill="#363636"/></g></svg></div><div style="left:1227px;top:134px;width:21px;height:29.5px;background:#222222;"></div><svg style="left:1234.5px;top:143px;" width="12" height="12" viewBox="0 0 12 12"><path d="M0 1h11.500M0 4.200h11.500M0 7.400h11.500M0 10.600h11.500" stroke="#e4e4e4" stroke-width="1.500"/></svg><div style="left:31px;top:174px;width:1217px;height:868.4px;background:#1a1a1a;"></div><div style="left:31.5px;top:174px;width:48px;height:16.5px;background:#202020;"></div><div style="left:31.5px;top:190.5px;width:48px;height:851.9px;background:#343434;"></div><div style="left:78.5px;top:174px;width:1px;height:868.4px;background:#2a2a2a;"></div><svg style="left:33px;top:178.3px;" width="12" height="8" viewBox="0 0 12 8"><path d="M0.800 0.300L4 3.600 0.800 6.900M5.800 0.300L9 3.600 5.800 6.900" fill="none" stroke="#a0a0a0" stroke-width="1.300"/></svg><div style="left:37.5px;top:195.5px;width:27.5px;height:5.5px;background:repeating-linear-gradient(90deg,#161616 0,#161616 1.500px,transparent 1.500px,transparent 2.750px);"></div><svg style="left:0px;top:0px;" width="1" height="1" viewBox="0 0 1 1"><defs><linearGradient id="tg" x1="0" y1="0" x2="0" y2="1"><stop offset="0" stop-color="#e0e0e0"/><stop offset="1" stop-color="#9a9a9a"/></linearGradient><linearGradient id="tg2" x1="0" y1="0" x2="0" y2="1"><stop offset="0" stop-color="#8a8a8a"/><stop offset="1" stop-color="#4c4c4c"/></linearGradient><linearGradient id="tg3" x1="0" y1="0" x2="1" y2="0"><stop offset="0" stop-color="#3a3a3a"/><stop offset="1" stop-color="#e0e0e0"/></linearGradient></defs></svg><svg style="left:44px;top:214px;" width="20" height="27" viewBox="0 0 20 27"><path d="M2.200 2.200L2.200 20.800 6.800 16.600 10.200 24.300 13.600 22.800 10.300 15.300 16.300 15.300Z" fill="#343434" stroke="#e2e2e2" stroke-width="1.700" stroke-linejoin="miter"/></svg><svg style="left:45px;top:248.5px;" width="20" height="26" viewBox="0 0 20 26"><path d="M1.500 1.200L1.500 19.200 6 15.200 9.600 23 12.800 21.500 9.300 14 15.500 14Z" fill="url(#tg)"/></svg><svg style="left:43px;top:284px;" width="24" height="25" viewBox="0 0 24 25"><path d="M1 1H12.500L18 6.500V22H1Z" fill="url(#tg)"/><path d="M12.500 1V6.500H18Z" fill="#6a6a6a"/><path d="M12.500 1V6.500H18" fill="none" stroke="#343434" stroke-width="1"/><path d="M13.300 9.500L13.300 23.800 16.300 21 18.500 25 20.300 24 18.200 20.200 22 20.200Z" fill="#e6e6e6" stroke="#343434" stroke-width="1"/></svg><svg style="left:37px;top:319px;" width="32" height="23" viewBox="0 0 32 23"><rect x="0.800" y="1" width="2.600" height="20" fill="url(#tg)"/><rect x="27.600" y="1" width="2.600" height="20" fill="url(#tg)"/><path d="M8 11h15" stroke="#d8d8d8" stroke-width="2"/><path d="M10.500 6.300L5.300 11l5.200 4.700zM20.500 6.300l5.200 4.700-5.200 4.700z" fill="#d8d8d8"/></svg><svg style="left:41px;top:352px;" width="24" height="24" viewBox="0 0 24 24"><path d="M1 9.500V22.500H22V9.500H19.500V18.800H3.500V9.500Z" fill="url(#tg)"/><path d="M5.500 12.500h3v2.500h-3zM10.300 12.500h3v2.500h-3zM15 12.500h3v2.500h-3zM5.500 16h3v2.300h-3zM10.300 16h3v2.300h-3zM15 16h3v2.300h-3z" fill="#c8c8c8"/><path d="M5.500 1.500L11.500 7.500" stroke="#e0e0e0" stroke-width="2.200"/><path d="M13.300 3.300V9.300H7.300Z" fill="#e0e0e0"/></svg><svg style="left:65px;top:372px;" width="6" height="6" viewBox="0 0 6 6"><path d="M6 0V6H0z" fill="#e0e0e0"/></svg><div style="left:32.5px;top:383px;width:45px;height:1px;background:#2a2a2a;"></div><div style="left:32.5px;top:384px;width:45px;height:1px;background:#3e3e3e;"></div><div style="left:32.5px;top:387px;width:39.5px;height:30.5px;background:#222222;box-shadow:inset 0 0 0 1px #2c2c2c;"></div><span style="left:43.6px;top:387.13px;font-size:28.5px;line-height:28.5px;color:#d9d9d9;white-space:pre;font-family:'Liberation Serif';letter-spacing:0.49px;">T</span><svg style="left:65px;top:410.5px;" width="6" height="6" viewBox="0 0 6 6"><path d="M6 0V6H0z" fill="#e0e0e0"/></svg><svg style="left:40px;top:423px;" width="24" height="24" viewBox="0 0 24 24"><path d="M2.600 21.400L21.600 2.700" stroke="#d8d8d8" stroke-width="1.700"/></svg><svg style="left:40px;top:456px;" width="28" height="28" viewBox="0 0 28 28"><path d="M1.300 25L7 9.700L15 5L21.300 11.700L17.300 20.300L3.700 26Z" fill="url(#tg)"/><path d="M2.300 24.600L11.500 16.200" stroke="#343434" stroke-width="1.900" stroke-linecap="round"/><path d="M15.200 3.800L17.300 1.700L25.500 9.600L23.800 12.600Z" fill="#cfcfcf"/></svg><svg style="left:65px;top:478.5px;" width="6" height="6" viewBox="0 0 6 6"><path d="M6 0V6H0z" fill="#e0e0e0"/></svg><svg style="left:40px;top:491px;" width="26" height="25" viewBox="0 0 26 25"><path d="M1.500 23.500L3.800 16 8.500 20.800Z" fill="#b4b4b4"/><path d="M4.600 14.800L14.500 5 19.500 10 9.500 19.800Z" fill="#6c6c6c"/><path d="M15.500 4L17 2.500C18.500 1 21 1 22.300 2.300 23.600 3.600 23.600 6 22 7.500L20.500 9Z" fill="#d8d8d8"/><path d="M1.500 23.500l1-3.200 2.200 2.200z" fill="#eaeaea"/></svg><svg style="left:65px;top:512.5px;" width="6" height="6" viewBox="0 0 6 6"><path d="M6 0V6H0z" fill="#e0e0e0"/></svg><svg style="left:42px;top:529.5px;" width="22" height="18" viewBox="0 0 22 18"><rect x="1" y="1" width="19.500" height="16" fill="url(#tg2)" stroke="#dcdcdc" stroke-width="1.500"/><path d="M1 1L20.500 17M20.500 1L1 17" stroke="#dcdcdc" stroke-width="1.200"/></svg><svg style="left:65px;top:546.5px;" width="6" height="6" viewBox="0 0 6 6"><path d="M6 0V6H0z" fill="#e0e0e0"/></svg><svg style="left:42px;top:563.5px;" width="22" height="18" viewBox="0 0 22 18"><rect x="1" y="1" width="19.500" height="16" fill="url(#tg2)" stroke="#dcdcdc" stroke-width="1.500"/></svg><svg style="left:65px;top:580.8px;" width="6" height="6" viewBox="0 0 6 6"><path d="M6 0V6H0z" fill="#e0e0e0"/></svg><div style="left:32.5px;top:590.5px;width:45px;height:1px;background:#2a2a2a;"></div><div style="left:32.5px;top:591.5px;width:45px;height:1px;background:#3e3e3e;"></div><svg style="left:40px;top:599px;" width="26" height="22" viewBox="0 0 26 22"><path d="M1.600 4.400Q10 6.200 16.800 13.500M1.600 15.600Q10 13.800 17.300 6.900" fill="none" stroke="#d6d6d6" stroke-width="1.900" stroke-linecap="round"/><circle cx="20.300" cy="5.200" r="3.300" fill="none" stroke="#d6d6d6" stroke-width="1.600"/><ellipse cx="19.800" cy="16.300" rx="4" ry="3" fill="none" stroke="#d6d6d6" stroke-width="1.600"/></svg><svg style="left:39px;top:634px;" width="27" height="22" viewBox="0 0 27 22"><rect x="6.800" y="1.400" width="17.600" height="13.800" fill="url(#tg2)" stroke="#d8d8d8" stroke-width="1.400"/><rect x="1.500" y="9.600" width="10.800" height="10.500" fill="none" stroke="#c4c4c4" stroke-width="1.400"/><path d="M15.300 9.700L21 4.800" stroke="#e6e6e6" stroke-width="1.500"/><path d="M17.500 3.700h4.700v4.700" fill="none" stroke="#e6e6e6" stroke-width="1.500"/></svg><svg style="left:65px;top:653px;" width="6" height="6" viewBox="0 0 6 6"><path d="M6 0V6H0z" fill="#e0e0e0"/></svg><svg style="left:40px;top:669.5px;" width="26" height="18" viewBox="0 0 26 18"><rect x="1" y="1" width="23" height="16" fill="url(#tg3)" stroke="#d8d8d8" stroke-width="1.300"/></svg><svg style="left:40px;top:703.5px;" width="26" height="18" viewBox="0 0 26 18"><defs><pattern id="ck" width="6" height="6" patternUnits="userSpaceOnUse"><rect width="6" height="6" fill="#d0d0d0"/><rect width="3" height="3" fill="#5a5a5a"/><rect x="3" y="3" width="3" height="3" fill="#5a5a5a"/></pattern><linearGradient id="tg4" x1="0" y1="0" x2="0" y2="1"><stop offset="0" stop-color="#555" stop-opacity="0"/><stop offset="1" stop-color="#4a4a4a" stop-opacity=".95"/></linearGradient></defs><rect x="1" y="1" width="23" height="16" fill="url(#ck)"/><rect x="1" y="1" width="23" height="16" fill="url(#tg4)" stroke="#d8d8d8" stroke-width="1.300"/></svg><div style="left:32.5px;top:731.5px;width:45px;height:1px;background:#2a2a2a;"></div><div style="left:32.5px;top:732.5px;width:45px;height:1px;background:#3e3e3e;"></div><svg style="left:42px;top:741.5px;" width="22" height="21" viewBox="0 0 22 21"><path d="M0.500 0.500H20.500V13.500L14 19.800H0.500Z" fill="url(#tg)"/><path d="M14 19.800V13.500H20.500Z" fill="#7a7a7a"/><path d="M4.500 5h12M4.500 8.300h12M4.500 11.600h8" stroke="#343434" stroke-width="1.700"/></svg><svg style="left:42px;top:773px;" width="24" height="24" viewBox="0 0 24 24"><path d="M2 22L3 18.500 12.500 9 15 11.500 5.500 21Z" fill="#555" stroke="#d6d6d6" stroke-width="1.300"/><path d="M10.500 6.500L17.500 13.500" stroke="#d6d6d6" stroke-width="3"/><path d="M14.500 8.500L18 3.500C19 2.200 21 2.300 22 3.500 22.800 4.500 22.500 6 21.500 6.800L16.500 10.500Z" fill="#d6d6d6"/></svg><svg style="left:65px;top:793px;" width="6" height="6" viewBox="0 0 6 6"><path d="M6 0V6H0z" fill="#e0e0e0"/></svg><svg style="left:39px;top:808px;" width="26" height="24" viewBox="0 0 26 24"><path d="M8 22.500C6 19 3.500 16 1 13.500 2.500 12 4.500 12.500 7 15.500L6 5.500C6 4 8.300 4 8.500 5.500L10 12 10.300 2.500C10.300 .800 12.800 .800 13 2.500L13.500 12 15.500 3.500C15.800 2 18 2.300 18 4L17 13 20 7.500C20.800 6.300 22.800 7.200 22.300 8.800 20.500 13.500 19.500 18 18.500 22.500Z" fill="url(#tg)"/></svg><svg style="left:42px;top:841px;" width="24" height="24" viewBox="0 0 24 24"><circle cx="9.300" cy="9.300" r="7" fill="#6c6c6c" stroke="#bcbcbc" stroke-width="1.800"/><ellipse cx="9.300" cy="7" rx="4" ry="2.600" fill="#868686"/><path d="M14.800 14.800L21.300 21.300" stroke="#a9a9a9" stroke-width="3.500" stroke-linecap="round"/></svg><div style="left:32.5px;top:872px;width:45px;height:1px;background:#2a2a2a;"></div><div style="left:32.5px;top:873px;width:45px;height:1px;background:#3e3e3e;"></div><svg style="left:34px;top:875px;" width="36" height="48" viewBox="0 0 36 48"><rect x="16" y="13.200" width="15.600" height="15.600" fill="#f4f4f4" stroke="#5e5e5e" stroke-width="1"/><rect x="19.700" y="16.600" width="7.400" height="9.200" fill="none" stroke="#cdcdcd" stroke-width="1.300"/><path d="M16.600 27.900L30.700 14.500" stroke="#ff1414" stroke-width="3"/><rect x="4.300" y="3" width="17.500" height="17.500" fill="#8a8a8a"/><rect x="5.700" y="4.600" width="14.700" height="14.400" fill="#ffffff"/><text x="8.500" y="17.700" font-family="Liberation Serif" font-weight="bold" font-size="14.300" fill="#000" stroke="#000" stroke-width="0.500" textLength="11.200" lengthAdjust="spacingAndGlyphs">T</text><path d="M25 3.800c2.800 0 4.800 2 4.800 4.600" fill="none" stroke="#d0d0d0" stroke-width="1.400"/><path d="M26 1.300v4.800l-3.300-2.400zM27.300 7.600h5l-2.500 3.300z" fill="#d0d0d0"/><rect x="6.900" y="34.700" width="10.600" height="10" fill="#171717" stroke="#8a8a8a" stroke-width="1.200"/><path d="M10.600 40.300H13.500V37.400" fill="none" stroke="#dcdcdc" stroke-width="1.200"/><rect x="3.200" y="30" width="8.800" height="8.800" fill="#dcdcdc" stroke="#8c8c8c" stroke-width="1.200"/><path d="M3.700 38.300L11.500 30.500" stroke="#f01818" stroke-width="1.700"/></svg><div style="left:35.2px;top:929px;width:12px;height:11.7px;background:#4c4c4c;border:1.500px solid #787878;box-sizing:border-box;"></div><div style="left:54px;top:927.2px;width:20px;height:16.6px;background:#202020;"></div><span style="left:57.7px;top:926.87px;font-size:16.03px;line-height:16.03px;color:transparent;white-space:pre;font-family:'Liberation Serif';font-weight:bold;transform:scaleX(1.13);transform-origin:0 0;background:linear-gradient(#f2f2f2 25%,#9c9c9c 85%);-webkit-background-clip:text;background-clip:text;-webkit-text-stroke:0;padding:2px 0;margin-top:-2px;">T</span><div style="left:33px;top:954px;width:39px;height:30.5px;background:#232323;"></div><svg style="left:40px;top:958.5px;" width="24" height="21" viewBox="0 0 24 21"><rect x="1" y="1" width="22" height="18.500" fill="#ffffff" stroke="#b8b8b8" stroke-width="1.200"/><path d="M2 18.500L22 2.500" stroke="#f40f0f" stroke-width="2.600"/></svg><svg style="left:65px;top:977.5px;" width="6" height="6" viewBox="0 0 6 6"><path d="M6 0V6H0z" fill="#e0e0e0"/></svg><div style="left:33px;top:995px;width:39px;height:30.5px;background:#232323;"></div><svg style="left:45px;top:1002px;" width="18" height="17" viewBox="0 0 18 17"><rect x="0.800" y="0.800" width="15" height="14.500" fill="#2a2a2a" stroke="#cfcfcf" stroke-width="1.500"/><path d="M0.800 3.300h15" stroke="#cfcfcf" stroke-width="1.600"/><rect x="3.300" y="6" width="6" height="3" fill="#e6e6e6"/><rect x="7" y="8.500" width="6.500" height="3.500" fill="#e6e6e6"/></svg><svg style="left:65px;top:1018.5px;" width="6" height="6" viewBox="0 0 6 6"><path d="M6 0V6H0z" fill="#e0e0e0"/></svg><div style="left:81.2px;top:174px;width:2.6px;height:868.4px;background:#272727;"></div><div style="left:83.5px;top:174px;width:1064.5px;height:27px;background:linear-gradient(#2a2a2a 0,#2a2a2a 1px,#1c1c1c 1px);"></div><div style="left:83.5px;top:174px;width:303.8px;height:27px;background:linear-gradient(#444 0,#444 1px,#353535 1px);"></div><div style="left:387.3px;top:174px;width:1px;height:27px;background:#181818;"></div><svg style="left:105px;top:183.5px;" width="10" height="10" viewBox="0 0 10 10"><path d="M0.800 0.800L8.500 8.500M8.500 0.800L0.800 8.500" stroke="#c8c8c8" stroke-width="1.300"/></svg><span style="left:127.5px;top:181.57px;font-size:13.5px;line-height:13.5px;color:#dcdcdc;white-space:pre;font-weight:bold;letter-spacing:0.85px;">*Untitled–1 @ 55% [GPU Preview]</span><div style="left:83.5px;top:201px;width:1042.5px;height:23.5px;background:#1f1f1f;"></div><div style="left:83.5px;top:223.4px;width:1042.5px;height:1.6px;background:#787878;"></div><svg style="left:84px;top:202px;" width="22" height="22" viewBox="0 0 22 22"><path d="M0 6.500h21M6 0v22" stroke="#bdbdbd" stroke-width="1" stroke-dasharray="1 1.500"/></svg><svg style="left:83.5px;top:201px;" width="1042.5" height="24" viewBox="0 0 1042.5 24"><path d="M27.55 23.500v-2.8M41.95 23.500v-23M56.35 23.500v-2.8M70.76 23.500v-5.7M85.16 23.500v-2.8M99.57 23.500v-7.5M113.97 23.500v-2.8M128.38 23.500v-5.7M142.78 23.500v-2.8M157.19 23.500v-23M171.59 23.500v-2.8M186 23.500v-5.7M200.4 23.500v-2.8M214.81 23.500v-7.5M229.21 23.500v-2.8M243.62 23.500v-5.7M258.02 23.500v-2.8M272.43 23.500v-23M286.83 23.500v-2.8M301.24 23.500v-5.7M315.64 23.500v-2.8M330.05 23.500v-7.5M344.45 23.500v-2.8M358.86 23.500v-5.7M373.26 23.500v-2.8M387.67 23.500v-23M402.07 23.500v-2.8M416.48 23.500v-5.7M430.88 23.500v-2.8M445.29 23.500v-7.5M459.7 23.500v-2.8M474.1 23.500v-5.7M488.5 23.500v-2.8M502.91 23.500v-23M517.31 23.500v-2.8M531.72 23.500v-5.7M546.12 23.500v-2.8M560.53 23.500v-7.5M574.94 23.500v-2.8M589.34 23.500v-5.7M603.75 23.500v-2.8M618.15 23.500v-23M632.56 23.500v-2.8M646.96 23.500v-5.7M661.37 23.500v-2.8M675.77 23.500v-7.5M690.18 23.500v-2.8M704.58 23.500v-5.7M718.99 23.500v-2.8M733.39 23.500v-23M747.79 23.500v-2.8M762.2 23.500v-5.7M776.61 23.500v-2.8M791.01 23.500v-7.5M805.41 23.500v-2.8M819.82 23.500v-5.7M834.23 23.500v-2.8M848.63 23.500v-23M863.03 23.500v-2.8M877.44 23.500v-5.7M891.85 23.500v-2.8M906.25 23.500v-7.5M920.65 23.500v-2.8M935.06 23.500v-5.7M949.46 23.500v-2.8M963.87 23.500v-23M978.27 23.500v-2.8M992.68 23.500v-5.7M1007.09 23.500v-2.8M1021.49 23.500v-7.5M1035.89 23.500v-2.8" stroke="#8f8f8f" stroke-width="1"/></svg><span style="left:128.85px;top:203.03px;font-size:15.2px;line-height:15.2px;color:#d6d6d6;white-space:pre;transform:scaleX(0.88);transform-origin:0 0;-webkit-text-stroke:0.150px;">0</span><span style="left:244.09px;top:203.03px;font-size:15.2px;line-height:15.2px;color:#d6d6d6;white-space:pre;transform:scaleX(0.88);transform-origin:0 0;-webkit-text-stroke:0.150px;">1</span><span style="left:359.33px;top:203.03px;font-size:15.2px;line-height:15.2px;color:#d6d6d6;white-space:pre;transform:scaleX(0.88);transform-origin:0 0;-webkit-text-stroke:0.150px;">2</span><span style="left:474.57px;top:203.03px;font-size:15.2px;line-height:15.2px;color:#d6d6d6;white-space:pre;transform:scaleX(0.88);transform-origin:0 0;-webkit-text-stroke:0.150px;">3</span><span style="left:589.81px;top:203.03px;font-size:15.2px;line-height:15.2px;color:#d6d6d6;white-space:pre;transform:scaleX(0.88);transform-origin:0 0;-webkit-text-stroke:0.150px;">4</span><span style="left:705.05px;top:203.03px;font-size:15.2px;line-height:15.2px;color:#d6d6d6;white-space:pre;transform:scaleX(0.88);transform-origin:0 0;-webkit-text-stroke:0.150px;">5</span><span style="left:820.29px;top:203.03px;font-size:15.2px;line-height:15.2px;color:#d6d6d6;white-space:pre;transform:scaleX(0.88);transform-origin:0 0;-webkit-text-stroke:0.150px;">6</span><span style="left:935.53px;top:203.03px;font-size:15.2px;line-height:15.2px;color:#d6d6d6;white-space:pre;transform:scaleX(0.88);transform-origin:0 0;-webkit-text-stroke:0.150px;">7</span><span style="left:1050.77px;top:203.03px;font-size:15.2px;line-height:15.2px;color:#d6d6d6;white-space:pre;transform:scaleX(0.88);transform-origin:0 0;-webkit-text-stroke:0.150px;">8</span><div style="left:83.5px;top:225px;width:22px;height:817.4px;background:#1f1f1f;"></div><div style="left:83.5px;top:225px;width:22px;height:7.5px;background:#2b2b2b;"></div><div style="left:83.5px;top:232.5px;width:22px;height:1px;background:#5a5a5a;"></div><svg style="left:83.5px;top:225px;" width="22" height="817.4" viewBox="0 0 22 817.4"><path d="M22 22.71h-2.5M22 37.11h-7M22 51.51h-2.5M22 65.92h-10M22 80.32h-2.5M22 94.73h-7M22 109.13h-2.5M22 123.54h-22M22 137.94h-2.5M22 152.35h-7M22 166.75h-2.5M22 181.16h-10M22 195.56h-2.5M22 209.97h-7M22 224.38h-2.5M22 238.78h-22M22 253.19h-2.5M22 267.59h-7M22 282h-2.5M22 296.4h-10M22 310.81h-2.5M22 325.21h-7M22 339.62h-2.5M22 354.02h-22M22 368.42h-2.5M22 382.83h-7M22 397.24h-2.5M22 411.64h-10M22 426.05h-2.5M22 440.45h-7M22 454.86h-2.5M22 469.26h-22M22 483.66h-2.5M22 498.07h-7M22 512.47h-2.5M22 526.88h-10M22 541.29h-2.5M22 555.69h-7M22 570.1h-2.5M22 584.5h-22M22 598.9h-2.5M22 613.31h-7M22 627.71h-2.5M22 642.12h-10M22 656.53h-2.5M22 670.93h-7M22 685.34h-2.5M22 699.74h-22M22 714.14h-2.5M22 728.55h-7M22 742.95h-2.5M22 757.36h-10M22 771.76h-2.5M22 786.17h-7M22 800.58h-2.5M22 814.98h-22" stroke="#8f8f8f" stroke-width="1"/></svg><span style="left:86.8px;top:234.83px;font-size:15.2px;line-height:15.2px;color:#d6d6d6;white-space:pre;transform:scaleX(0.88);transform-origin:0 0;-webkit-text-stroke:0.150px;">0</span><span style="left:86.8px;top:350.07px;font-size:15.2px;line-height:15.2px;color:#d6d6d6;white-space:pre;transform:scaleX(0.88);transform-origin:0 0;-webkit-text-stroke:0.150px;">1</span><span style="left:86.8px;top:465.31px;font-size:15.2px;line-height:15.2px;color:#d6d6d6;white-space:pre;transform:scaleX(0.88);transform-origin:0 0;-webkit-text-stroke:0.150px;">2</span><span style="left:86.8px;top:580.55px;font-size:15.2px;line-height:15.2px;color:#d6d6d6;white-space:pre;transform:scaleX(0.88);transform-origin:0 0;-webkit-text-stroke:0.150px;">3</span><span style="left:86.8px;top:695.79px;font-size:15.2px;line-height:15.2px;color:#d6d6d6;white-space:pre;transform:scaleX(0.88);transform-origin:0 0;-webkit-text-stroke:0.150px;">4</span><span style="left:86.8px;top:811.03px;font-size:15.2px;line-height:15.2px;color:#d6d6d6;white-space:pre;transform:scaleX(0.88);transform-origin:0 0;-webkit-text-stroke:0.150px;">5</span><span style="left:86.8px;top:926.27px;font-size:15.2px;line-height:15.2px;color:#d6d6d6;white-space:pre;transform:scaleX(0.88);transform-origin:0 0;-webkit-text-stroke:0.150px;">6</span><div style="left:105.5px;top:225px;width:1020.5px;height:817.4px;background:#656565;"></div><div style="left:105px;top:201.5px;width:1.3px;height:840.9px;background:#6f6f6f;"></div><div style="left:125.6px;top:233px;width:979.4px;height:809.4px;background:#ffffff;"></div><div style="left:1105px;top:236px;width:3px;height:806.4px;background:#000;"></div><div style="left:1126px;top:201px;width:21.5px;height:841.4px;background:#252525;border-left:1px solid #1b1b1b;box-sizing:border-box;"></div><svg style="left:1131px;top:209px;" width="13.5" height="9.5" viewBox="0 0 13.5 9.5"><path d="M0 9.5 H13.5 L6.75 0Z" fill="#e6e6e6"/></svg><div style="left:1127px;top:354px;width:20.2px;height:688.4px;background:#818181;box-shadow:inset 1px 1px 0 #8c8c8c;"></div><div style="left:182px;top:290px;width:865.5px;height:1px;background:#ff4dff;"></div><div style="left:1047px;top:290px;width:1px;height:235px;background:#a536ff;"></div><div style="left:182px;top:290px;width:1.2px;height:752.4px;background:#a536ff;"></div><div style="left:789px;top:291px;width:1.2px;height:234px;background:#5b9bf5;"></div><div style="left:183px;top:665.5px;width:317px;height:1.2px;background:#7fb2f5;"></div><div style="left:183px;top:405.3px;width:606.5px;height:2.1px;background:#101010;"></div><div style="left:183px;top:496.9px;width:606.5px;height:2.1px;background:#101010;"></div><span style="left:182.55px;top:288.26px;font-size:31px;line-height:31px;color:#0a0a0a;white-space:pre;transform:scaleX(1.07);transform-origin:0 0;-webkit-text-stroke:0;">Formatting</span><span style="left:346.8px;top:288.26px;font-size:31px;line-height:31px;color:#0a0a0a;white-space:pre;transform:scaleX(1.09);transform-origin:0 0;-webkit-text-stroke:0;">from</span><span style="left:421.3px;top:288.26px;font-size:31px;line-height:31px;color:#0a0a0a;white-space:pre;transform:scaleX(1.06);transform-origin:0 0;-webkit-text-stroke:0;">the</span><span style="left:478.8px;top:288.26px;font-size:31px;line-height:31px;color:#0a0a0a;white-space:pre;transform:scaleX(1.04);transform-origin:0 0;-webkit-text-stroke:0;">previous</span><span style="left:608.8px;top:288.26px;font-size:31px;line-height:31px;color:#0a0a0a;white-space:pre;transform:scaleX(1.03);transform-origin:0 0;-webkit-text-stroke:0;">paragraph</span><div style="left:342.6px;top:304.6px;width:2.8px;height:2.8px;background:#4a93f2;border-radius:50%;"></div><div style="left:417.35px;top:304.6px;width:2.8px;height:2.8px;background:#4a93f2;border-radius:50%;"></div><div style="left:472.35px;top:304.6px;width:2.8px;height:2.8px;background:#4a93f2;border-radius:50%;"></div><div style="left:602.6px;top:304.6px;width:2.8px;height:2.8px;background:#4a93f2;border-radius:50%;"></div><div style="left:758.1px;top:304.6px;width:2.8px;height:2.8px;background:#4a93f2;border-radius:50%;"></div><span style="left:182.55px;top:326.76px;font-size:31px;line-height:31px;color:#0a0a0a;white-space:pre;transform:scaleX(1);transform-origin:0 0;-webkit-text-stroke:0;">is</span><span style="left:213.3px;top:326.76px;font-size:31px;line-height:31px;color:#0a0a0a;white-space:pre;transform:scaleX(1.07);transform-origin:0 0;-webkit-text-stroke:0;">duplicated</span><span style="left:371.8px;top:326.76px;font-size:31px;line-height:31px;color:#0a0a0a;white-space:pre;transform:scaleX(1.18);transform-origin:0 0;-webkit-text-stroke:0;">to</span><span style="left:409.3px;top:326.76px;font-size:31px;line-height:31px;color:#0a0a0a;white-space:pre;transform:scaleX(1.09);transform-origin:0 0;-webkit-text-stroke:0;">the</span><span style="left:466.3px;top:326.76px;font-size:31px;line-height:31px;color:#0a0a0a;white-space:pre;transform:scaleX(1.06);transform-origin:0 0;-webkit-text-stroke:0;">next</span><span style="left:536.3px;top:326.76px;font-size:31px;line-height:31px;color:#0a0a0a;white-space:pre;transform:scaleX(1.03);transform-origin:0 0;-webkit-text-stroke:0;">paragraph</span><span style="left:689.8px;top:326.76px;font-size:31px;line-height:31px;color:#0a0a0a;white-space:pre;transform:scaleX(1.06);transform-origin:0 0;-webkit-text-stroke:0;">when</span><div style="left:208.1px;top:343.1px;width:2.8px;height:2.8px;background:#4a93f2;border-radius:50%;"></div><div style="left:367.35px;top:343.1px;width:2.8px;height:2.8px;background:#4a93f2;border-radius:50%;"></div><div style="left:404.6px;top:343.1px;width:2.8px;height:2.8px;background:#4a93f2;border-radius:50%;"></div><div style="left:460.6px;top:343.1px;width:2.8px;height:2.8px;background:#4a93f2;border-radius:50%;"></div><div style="left:530.6px;top:343.1px;width:2.8px;height:2.8px;background:#4a93f2;border-radius:50%;"></div><div style="left:684.6px;top:343.1px;width:2.8px;height:2.8px;background:#4a93f2;border-radius:50%;"></div><div style="left:770.6px;top:343.1px;width:2.8px;height:2.8px;background:#4a93f2;border-radius:50%;"></div><span style="left:181.8px;top:364.76px;font-size:31px;line-height:31px;color:#0a0a0a;white-space:pre;transform:scaleX(1.04);transform-origin:0 0;-webkit-text-stroke:0;">you</span><span style="left:241.8px;top:364.76px;font-size:31px;line-height:31px;color:#0a0a0a;white-space:pre;transform:scaleX(1.01);transform-origin:0 0;-webkit-text-stroke:0;">press</span><span style="left:327.55px;top:364.76px;font-size:31px;line-height:31px;color:#0a0a0a;white-space:pre;transform:scaleX(1.05);transform-origin:0 0;-webkit-text-stroke:0;">Enter/Return.</span><div style="left:236.6px;top:381.1px;width:2.8px;height:2.8px;background:#4a93f2;border-radius:50%;"></div><div style="left:321.6px;top:381.1px;width:2.8px;height:2.8px;background:#4a93f2;border-radius:50%;"></div><span style="left:517.5px;top:370.72px;font-size:21px;line-height:21px;color:#4f97f2;white-space:pre;font-weight:bold;transform:scaleX(0.86);transform-origin:0 0;">¶</span><span style="left:183.3px;top:418.76px;font-size:31px;line-height:31px;color:#0a0a0a;white-space:pre;transform:scaleX(1.18);transform-origin:0 0;-webkit-text-stroke:0;">It</span><span style="left:211.3px;top:418.76px;font-size:31px;line-height:31px;color:#0a0a0a;white-space:pre;transform:scaleX(1.09);transform-origin:0 0;-webkit-text-stroke:0;">might</span><span style="left:302.55px;top:418.76px;font-size:31px;line-height:31px;color:#0a0a0a;white-space:pre;transform:scaleX(0.98);transform-origin:0 0;-webkit-text-stroke:0;">be</span><span style="left:344.55px;top:418.76px;font-size:31px;line-height:31px;color:#0a0a0a;white-space:pre;transform:scaleX(1.03);transform-origin:0 0;-webkit-text-stroke:0;">an</span><span style="left:388.3px;top:418.76px;font-size:31px;line-height:31px;color:#0a0a0a;white-space:pre;transform:scaleX(1.06);transform-origin:0 0;-webkit-text-stroke:0;">underline</span><span style="left:530.8px;top:418.76px;font-size:31px;line-height:31px;color:#0a0a0a;white-space:pre;transform:scaleX(1.1);transform-origin:0 0;-webkit-text-stroke:0;">or</span><span style="left:568.8px;top:418.76px;font-size:31px;line-height:31px;color:#0a0a0a;white-space:pre;transform:scaleX(0.94);transform-origin:0 0;-webkit-text-stroke:0;">a</span><span style="left:592.55px;top:418.76px;font-size:31px;line-height:31px;color:#0a0a0a;white-space:pre;transform:scaleX(1.03);transform-origin:0 0;-webkit-text-stroke:0;">paragraph</span><div style="left:205.6px;top:435.1px;width:2.8px;height:2.8px;background:#4a93f2;border-radius:50%;"></div><div style="left:296.6px;top:435.1px;width:2.8px;height:2.8px;background:#4a93f2;border-radius:50%;"></div><div style="left:339.1px;top:435.1px;width:2.8px;height:2.8px;background:#4a93f2;border-radius:50%;"></div><div style="left:382.6px;top:435.1px;width:2.8px;height:2.8px;background:#4a93f2;border-radius:50%;"></div><div style="left:526.1px;top:435.1px;width:2.8px;height:2.8px;background:#4a93f2;border-radius:50%;"></div><div style="left:563.6px;top:435.1px;width:2.8px;height:2.8px;background:#4a93f2;border-radius:50%;"></div><div style="left:587.35px;top:435.1px;width:2.8px;height:2.8px;background:#4a93f2;border-radius:50%;"></div><div style="left:741.1px;top:435.1px;width:2.8px;height:2.8px;background:#4a93f2;border-radius:50%;"></div><span style="left:183.3px;top:456.26px;font-size:31px;line-height:31px;color:#0a0a0a;white-space:pre;transform:scaleX(1.01);transform-origin:0 0;-webkit-text-stroke:0;">rule.</span><span style="left:245.5px;top:464.72px;font-size:21px;line-height:21px;color:#62a3f5;white-space:pre;transform:scaleX(0.78);transform-origin:0 0;">#</span><div style="left:244px;top:448px;width:2px;height:44.5px;background:#000;"></div><div style="left:1148px;top:174px;width:100px;height:868.4px;background:#151515;"></div><div style="left:1150.5px;top:174.3px;width:97.5px;height:16.2px;background:#232323;"></div><svg style="left:1185.5px;top:178px;" width="12" height="8" viewBox="0 0 12 8"><path d="M4 0.300L0.800 3.600 4 6.900M9.600 0.300L6.400 3.600 9.600 6.900" fill="none" stroke="#bdbdbd" stroke-width="1.300"/></svg><svg style="left:1242.5px;top:177.7px;" width="6" height="8" viewBox="0 0 6 8"><path d="M4.200 0.300L0.800 3.700 4.200 7.100" fill="none" stroke="#bdbdbd" stroke-width="1.300"/></svg><div style="left:1151px;top:191px;width:53.5px;height:56.5px;background:#343434;"></div><div style="left:1151px;top:249px;width:53.5px;height:793.4px;background:#343434;"></div><svg style="left:1164px;top:195.2px;" width="28" height="6" viewBox="0 0 28 6"><path d="M0.65 0v5.800M3.51 0v5.800M6.37 0v5.800M9.23 0v5.800M12.09 0v5.800M14.95 0v5.800M17.81 0v5.800M20.67 0v5.800M23.53 0v5.800M26.39 0v5.800" stroke="#0e0e0e" stroke-width="1.350"/></svg><svg style="left:1166px;top:211px;" width="26" height="25" viewBox="0 0 26 25"><path d="M1 7.500L4.500 4H11V22.500H1Z" fill="url(#tg)"/><path d="M25 7.500L21.500 4H15V22.500H25Z" fill="url(#tg)"/><path d="M1 7.500H4.500V4M25 7.500H21.500V4" fill="none" stroke="#555" stroke-width="1"/><path d="M13 0.500V24.500" stroke="#e0e0e0" stroke-width="1.500"/></svg><div style="left:1208px;top:174px;width:40px;height:868.4px;overflow:hidden;"><div style="left:0px;top:17px;width:40px;height:56.5px;background:#343434;"></div><svg style="left:12.9px;top:21.2px;" width="25.6" height="6" viewBox="0 0 25.6 6"><path d="M0.65 0v5.800M3.51 0v5.800M6.37 0v5.800M9.23 0v5.800M12.09 0v5.800M14.95 0v5.800M17.81 0v5.800M20.67 0v5.800M23.53 0v5.800" stroke="#0e0e0e" stroke-width="1.350"/></svg><div style="left:0px;top:76px;width:40px;height:55.5px;background:#343434;"></div><svg style="left:12.9px;top:80.2px;" width="25.6" height="6" viewBox="0 0 25.6 6"><path d="M0.65 0v5.800M3.51 0v5.800M6.37 0v5.800M9.23 0v5.800M12.09 0v5.800M14.95 0v5.800M17.81 0v5.800M20.67 0v5.800M23.53 0v5.800" stroke="#0e0e0e" stroke-width="1.350"/></svg><div style="left:0px;top:134px;width:40px;height:95.5px;background:#343434;"></div><svg style="left:12.9px;top:138.2px;" width="25.6" height="6" viewBox="0 0 25.6 6"><path d="M0.65 0v5.800M3.51 0v5.800M6.37 0v5.800M9.23 0v5.800M12.09 0v5.800M14.95 0v5.800M17.81 0v5.800M20.67 0v5.800M23.53 0v5.800" stroke="#0e0e0e" stroke-width="1.350"/></svg><div style="left:0px;top:232px;width:40px;height:55.5px;background:#343434;"></div><svg style="left:12.9px;top:236.2px;" width="25.6" height="6" viewBox="0 0 25.6 6"><path d="M0.65 0v5.800M3.51 0v5.800M6.37 0v5.800M9.23 0v5.800M12.09 0v5.800M14.95 0v5.800M17.81 0v5.800M20.67 0v5.800M23.53 0v5.800" stroke="#0e0e0e" stroke-width="1.350"/></svg><div style="left:0px;top:290px;width:40px;height:578.4px;background:#343434;"></div><svg style="left:12.9px;top:294.2px;" width="25.6" height="6" viewBox="0 0 25.6 6"><path d="M0.65 0v5.800M3.51 0v5.800M6.37 0v5.800M9.23 0v5.800M12.09 0v5.800M14.95 0v5.800M17.81 0v5.800M20.67 0v5.800M23.53 0v5.800" stroke="#0e0e0e" stroke-width="1.350"/></svg><svg style="left:15px;top:37px;" width="30" height="28" viewBox="0 0 30 28"><path d="M15 1.500L28.500 9.500 15 17.500 1.500 9.500Z" fill="url(#tg)"/><path d="M3 15.500L15 22.500 27 15.500" fill="none" stroke="#cfcfcf" stroke-width="2.600"/></svg><svg style="left:15px;top:98px;" width="30" height="20" viewBox="0 0 30 20"><rect x="1.500" y="2.500" width="12.500" height="13" rx="5.500" fill="none" stroke="#d2d2d2" stroke-width="2.800"/><rect x="17.500" y="2.500" width="12.500" height="13" rx="5.500" fill="none" stroke="#d2d2d2" stroke-width="2.800"/><rect x="8.500" y="7.300" width="14" height="3.400" fill="#d2d2d2" stroke="#343434" stroke-width="1"/></svg><span style="left:17.5px;top:151.34px;font-size:25px;line-height:25px;color:#d0d0d0;white-space:pre;font-style:italic;letter-spacing:2.05px;">fx</span><svg style="left:14px;top:194px;" width="30" height="26" viewBox="0 0 30 26"><rect x="6.500" y="2" width="22" height="17" fill="#7c7c7c" stroke="#cfcfcf" stroke-width="1.200" stroke-dasharray="5 2.500"/><rect x="2" y="11" width="8.500" height="8.500" fill="#6a6a6a" stroke="#d0d0d0" stroke-width="1.500"/><rect x="6" y="15" width="8.500" height="8.500" fill="#8a8a8a" stroke="#d0d0d0" stroke-width="1.500"/></svg><svg style="left:12px;top:251px;" width="32" height="28" viewBox="0 0 32 28"><path d="M24 1.500H19.500c-4 0-6.500 2.400-6.500 5.600s2.500 5.600 6.500 5.600V20.500h2.200V1.500z" fill="#d6d6d6"/><path d="M25.200 1.500V20.500" stroke="#d6d6d6" stroke-width="1.800"/><rect x="3.500" y="11.500" width="8.500" height="8.500" fill="#6a6a6a" stroke="#d0d0d0" stroke-width="1.500"/><rect x="7.500" y="15.500" width="8.500" height="8.500" fill="#8a8a8a" stroke="#d0d0d0" stroke-width="1.500"/></svg><svg style="left:15px;top:310px;" width="26" height="26" viewBox="0 0 26 26"><path d="M0.500 2h25M0.500 6.300h5.500M0.500 10.600h4.500M0.500 14.900h5.500M0.500 19.200h25M0.500 23.500h25M19.500 6.300h6M20.500 10.600h5M19.500 14.900h6" stroke="#d8d8d8" stroke-width="1.400"/><circle cx="12.700" cy="11" r="5.600" fill="url(#tg)"/></svg><div style="left:38.3px;top:17px;width:1.7px;height:851.4px;background:#414141;"></div></div><div style="left:491.5px;top:520.5px;width:751px;height:521px;background:#343434;border-radius:6px 6px 5px 5px;box-shadow:0 9px 30px 5px rgba(0,0,0,.20),0 1px 5px rgba(0,0,0,.22),0 0 0 0.500px rgba(0,0,0,.28);"></div><div style="left:491.5px;top:520.5px;width:751px;height:31.8px;background:linear-gradient(#ebebeb,#e2e2e2 45%,#d2d2d2);border-radius:6px 6px 0 0;box-shadow:inset 0 1px 0 #f6f6f6;"></div><div style="left:1243px;top:537px;width:3.5px;height:7px;background:#8c8c8c;"></div><div style="left:1242.5px;top:559.5px;width:4px;height:1.2px;background:#1c1c1c;"></div><span style="left:796.5px;top:528.11px;font-size:18.3px;line-height:18.3px;color:#2b2b2b;white-space:pre;letter-spacing:0.26px;">Paragraph Rules</span><div style="left:507.5px;top:582.5px;width:698px;height:364px;border:1px solid #212121;box-sizing:border-box;box-shadow:inset 1px 1px 0 #3e3e3e,1px 1px 0 #3e3e3e;"></div><div style="left:524px;top:575px;width:264px;height:15px;background:#343434;"></div><div style="left:528px;top:568.5px;width:157.5px;height:26.3px;background:linear-gradient(#4b4b4b,#404040);border:1px solid #1f1f1f;box-sizing:border-box;box-shadow:inset 0 1px 0 rgba(255,255,255,.06);"></div><div style="left:657.5px;top:571.5px;width:1px;height:20.5px;background:#222;"></div><div style="left:658.5px;top:571.5px;width:1px;height:20.5px;background:#4a4a4a;"></div><span style="left:532px;top:573.83px;font-size:17.8px;line-height:17.8px;color:#e4e4e4;white-space:pre;letter-spacing:-0.11px;">Rule Below</span><svg style="left:667px;top:578.5px;" width="10.5" height="7" viewBox="0 0 10.5 7"><path d="M0 0H10.5 L5.25 7Z" fill="#e8e8e8"/></svg><div style="left:695px;top:574px;width:16.5px;height:16.5px;background:linear-gradient(#2a2a2a,#303030);border:1px solid #1c1c1c;box-sizing:border-box;box-shadow:0 1px 0 rgba(255,255,255,.07);"></div><svg style="left:695px;top:570px;" width="20.5" height="20.5" viewBox="0 0 20.5 20.5"><path d="M3.800 10.600L8 15.800L16.600 3.600" fill="none" stroke="#e8e8e8" stroke-width="2.100"/></svg><span style="left:717.5px;top:573.83px;font-size:17.8px;line-height:17.8px;color:#e4e4e4;white-space:pre;letter-spacing:0.03px;">Rule On</span><span style="left:567px;top:633.03px;font-size:17.8px;line-height:17.8px;color:#e4e4e4;white-space:pre;letter-spacing:0.31px;">Weight:</span><div style="left:637px;top:626px;width:24px;height:14.25px;background:linear-gradient(#404040,#333333);border:1px solid #1f1f1f;box-sizing:border-box;box-shadow:inset 0 1px 0 rgba(255,255,255,.06);"></div><div style="left:637px;top:639.25px;width:24px;height:14.25px;background:linear-gradient(#404040,#333333);border:1px solid #1f1f1f;box-sizing:border-box;box-shadow:inset 0 1px 0 rgba(255,255,255,.06);"></div><svg style="left:644.8px;top:630.3px;" width="8.4" height="5.7" viewBox="0 0 8.4 5.7"><path d="M0 5.7 H8.4 L4.2 0Z" fill="#e2e2e2"/></svg><svg style="left:644.8px;top:643.5px;" width="8.4" height="5.7" viewBox="0 0 8.4 5.7"><path d="M0 0H8.4 L4.2 5.7Z" fill="#e2e2e2"/></svg><div style="left:660.5px;top:625px;width:113px;height:29px;border:1px solid #ec9a3a;box-sizing:border-box;background:#e08a2a33;"></div><div style="left:662px;top:626.5px;width:84.5px;height:26px;background:#b6b6b6;border:1px solid #1f1f1f;box-sizing:border-box;box-shadow:inset 0 1px 1px rgba(0,0,0,.18);"></div><div style="left:745.5px;top:626.5px;width:26.5px;height:26px;background:linear-gradient(#404040,#333333);border:1px solid #1f1f1f;box-sizing:border-box;box-shadow:inset 0 1px 0 rgba(255,255,255,.06);"></div><svg style="left:754.75px;top:635.9px;" width="9.6" height="7.5" viewBox="0 0 9.6 7.5"><path d="M0 0H9.6 L4.8 7.5Z" fill="#e6e6e6"/></svg><div style="left:664.5px;top:629px;width:36px;height:22px;background:#b3d4fd;"></div><span style="left:667px;top:633.03px;font-size:17.8px;line-height:17.8px;color:#000;white-space:pre;letter-spacing:0.77px;">1 pt</span><span style="left:578.5px;top:670.03px;font-size:17.8px;line-height:17.8px;color:#e4e4e4;white-space:pre;letter-spacing:0.58px;">Color:</span><div style="left:638.5px;top:663.3px;width:183px;height:26.3px;background:#b6b6b6;border:1px solid #1f1f1f;box-sizing:border-box;box-shadow:inset 0 1px 1px rgba(0,0,0,.18);"></div><div style="left:820.5px;top:663.3px;width:27px;height:26.3px;background:linear-gradient(#404040,#333333);border:1px solid #1f1f1f;box-sizing:border-box;box-shadow:inset 0 1px 0 rgba(255,255,255,.06);"></div><svg style="left:830px;top:672.85px;" width="9.6" height="7.5" viewBox="0 0 9.6 7.5"><path d="M0 0H9.6 L4.8 7.5Z" fill="#e6e6e6"/></svg><div style="left:645px;top:668px;width:16px;height:16.5px;background:#000;box-shadow:0 0 0 1px #d8d8d8;"></div><span style="left:667px;top:669.03px;font-size:17.8px;line-height:17.8px;color:#000;white-space:pre;letter-spacing:0.41px;">(Text Color)</span><div style="left:638px;top:705px;width:16.5px;height:17px;background:linear-gradient(#2a2a2a,#303030);border:1px solid #1c1c1c;box-sizing:border-box;box-shadow:0 1px 0 rgba(255,255,255,.07);"></div><div style="left:641px;top:712px;width:10.5px;height:3.2px;background:#7a7a7a;"></div><span style="left:661px;top:707.03px;font-size:17.8px;line-height:17.8px;color:#828282;white-space:pre;letter-spacing:0.33px;">Overprint Stroke</span><span style="left:541.5px;top:744.03px;font-size:17.8px;line-height:17.8px;color:#e4e4e4;white-space:pre;letter-spacing:0.15px;">Gap Color:</span><div style="left:638.5px;top:737.5px;width:183px;height:26.1px;background:#adadad;border:1px solid #1f1f1f;box-sizing:border-box;box-shadow:inset 0 1px 1px rgba(0,0,0,.18);"></div><div style="left:820.5px;top:737.5px;width:27px;height:26.1px;background:linear-gradient(#404040,#333333);border:1px solid #1f1f1f;box-sizing:border-box;box-shadow:inset 0 1px 0 rgba(255,255,255,.06);"></div><svg style="left:830px;top:746.95px;" width="9.6" height="7.5" viewBox="0 0 9.6 7.5"><path d="M0 0H9.6 L4.8 7.5Z" fill="#707070"/></svg><svg style="left:644.5px;top:741.5px;" width="18" height="18" viewBox="0 0 18 18"><rect x="0.500" y="0.500" width="16" height="16" fill="#fff" stroke="#d0d0d0"/><path d="M1.500 16L16 1.500" stroke="#f01414" stroke-width="3"/></svg><span style="left:667px;top:743.03px;font-size:17.8px;line-height:17.8px;color:#4e4e4e;white-space:pre;letter-spacing:-0.09px;">[None]</span><div style="left:638px;top:779.5px;width:16.5px;height:17px;background:linear-gradient(#2a2a2a,#303030);border:1px solid #1c1c1c;box-sizing:border-box;box-shadow:0 1px 0 rgba(255,255,255,.07);"></div><div style="left:641px;top:786.5px;width:10.5px;height:3.2px;background:#7a7a7a;"></div><span style="left:661px;top:781.03px;font-size:17.8px;line-height:17.8px;color:#828282;white-space:pre;letter-spacing:0.18px;">Overprint Gap</span><span style="left:576.5px;top:817.53px;font-size:17.8px;line-height:17.8px;color:#e4e4e4;white-space:pre;letter-spacing:0.39px;">Width:</span><div style="left:637.5px;top:811px;width:140px;height:26px;background:linear-gradient(#414141,#333);border:1px solid #1f1f1f;box-sizing:border-box;box-shadow:inset 0 1px 0 rgba(255,255,255,.06);"></div><div style="left:749.5px;top:814px;width:1px;height:20px;background:#222;"></div><div style="left:750.5px;top:814px;width:1px;height:20px;background:#4a4a4a;"></div><span style="left:642.5px;top:817.03px;font-size:17.8px;line-height:17.8px;color:#e4e4e4;white-space:pre;letter-spacing:0.33px;">Column</span><svg style="left:759px;top:820.5px;" width="10.5" height="7" viewBox="0 0 10.5 7"><path d="M0 0H10.5 L5.25 7Z" fill="#e8e8e8"/></svg><span style="left:535px;top:854.53px;font-size:17.8px;line-height:17.8px;color:#e4e4e4;white-space:pre;letter-spacing:0.44px;">Left Indent:</span><div style="left:637px;top:848px;width:24px;height:13.25px;background:linear-gradient(#404040,#333333);border:1px solid #1f1f1f;box-sizing:border-box;box-shadow:inset 0 1px 0 rgba(255,255,255,.06);"></div><div style="left:637px;top:860.25px;width:24px;height:13.25px;background:linear-gradient(#404040,#333333);border:1px solid #1f1f1f;box-sizing:border-box;box-shadow:inset 0 1px 0 rgba(255,255,255,.06);"></div><svg style="left:644.8px;top:852.3px;" width="8.4" height="5.7" viewBox="0 0 8.4 5.7"><path d="M0 5.7 H8.4 L4.2 0Z" fill="#e2e2e2"/></svg><svg style="left:644.8px;top:863.5px;" width="8.4" height="5.7" viewBox="0 0 8.4 5.7"><path d="M0 0H8.4 L4.2 5.7Z" fill="#e2e2e2"/></svg><div style="left:662px;top:848px;width:116px;height:25.5px;background:#b6b6b6;border:1px solid #1f1f1f;box-sizing:border-box;box-shadow:inset 0 1px 1px rgba(0,0,0,.18);"></div><span style="left:667px;top:853.53px;font-size:17.8px;line-height:17.8px;color:#000;white-space:pre;letter-spacing:0.43px;">0 in</span><div style="left:522px;top:911px;width:17px;height:16.5px;background:linear-gradient(#2a2a2a,#303030);border:1px solid #1c1c1c;box-sizing:border-box;box-shadow:0 1px 0 rgba(255,255,255,.07);"></div><div style="left:525px;top:917.75px;width:11px;height:3.2px;background:#e8e8e8;"></div><span style="left:545px;top:913.03px;font-size:17.8px;line-height:17.8px;color:#e4e4e4;white-space:pre;letter-spacing:-0.14px;">Keep In Frame</span><span style="left:961px;top:633.03px;font-size:17.8px;line-height:17.8px;color:#e4e4e4;white-space:pre;letter-spacing:0.47px;">Type:</span><div style="left:1015px;top:626px;width:122px;height:26.8px;background:#b6b6b6;border:1px solid #1f1f1f;box-sizing:border-box;box-shadow:inset 0 1px 1px rgba(0,0,0,.18);"></div><div style="left:1136px;top:626px;width:27px;height:26.8px;background:linear-gradient(#404040,#333333);border:1px solid #1f1f1f;box-sizing:border-box;box-shadow:inset 0 1px 0 rgba(255,255,255,.06);"></div><svg style="left:1145.5px;top:635.8px;" width="9.6" height="7.5" viewBox="0 0 9.6 7.5"><path d="M0 0H9.6 L4.8 7.5Z" fill="#e6e6e6"/></svg><div style="left:1022px;top:634.5px;width:102px;height:10.7px;background:#000;"></div><span style="left:965.5px;top:670.03px;font-size:17.8px;line-height:17.8px;color:#e4e4e4;white-space:pre;letter-spacing:1.49px;">Tint:</span><div style="left:1012.5px;top:663px;width:23.5px;height:14px;background:linear-gradient(#404040,#333333);border:1px solid #1f1f1f;box-sizing:border-box;box-shadow:inset 0 1px 0 rgba(255,255,255,.06);"></div><div style="left:1012.5px;top:676px;width:23.5px;height:14px;background:linear-gradient(#404040,#333333);border:1px solid #1f1f1f;box-sizing:border-box;box-shadow:inset 0 1px 0 rgba(255,255,255,.06);"></div><svg style="left:1020.05px;top:667.3px;" width="8.4" height="5.7" viewBox="0 0 8.4 5.7"><path d="M0 5.7 H8.4 L4.2 0Z" fill="#6a6a6a"/></svg><svg style="left:1020.05px;top:680px;" width="8.4" height="5.7" viewBox="0 0 8.4 5.7"><path d="M0 0H8.4 L4.2 5.7Z" fill="#6a6a6a"/></svg><div style="left:1038px;top:663px;width:98px;height:27px;background:#969696;border:1px solid #1f1f1f;box-sizing:border-box;box-shadow:inset 0 0 0 1.800px #2d2d2d;"></div><div style="left:1135px;top:663px;width:28px;height:27px;background:linear-gradient(#404040,#333333);border:1px solid #1f1f1f;box-sizing:border-box;box-shadow:inset 0 1px 0 rgba(255,255,255,.06);"></div><svg style="left:1145px;top:672.9px;" width="9.6" height="7.5" viewBox="0 0 9.6 7.5"><path d="M0 0H9.6 L4.8 7.5Z" fill="#707070"/></svg><span style="left:929px;top:744.03px;font-size:17.8px;line-height:17.8px;color:#e4e4e4;white-space:pre;letter-spacing:0.52px;">Gap Tint:</span><div style="left:1012.5px;top:737.5px;width:23.5px;height:13.25px;background:linear-gradient(#404040,#333333);border:1px solid #1f1f1f;box-sizing:border-box;box-shadow:inset 0 1px 0 rgba(255,255,255,.06);"></div><div style="left:1012.5px;top:749.75px;width:23.5px;height:13.25px;background:linear-gradient(#404040,#333333);border:1px solid #1f1f1f;box-sizing:border-box;box-shadow:inset 0 1px 0 rgba(255,255,255,.06);"></div><svg style="left:1020.05px;top:741.8px;" width="8.4" height="5.7" viewBox="0 0 8.4 5.7"><path d="M0 5.7 H8.4 L4.2 0Z" fill="#6a6a6a"/></svg><svg style="left:1020.05px;top:753px;" width="8.4" height="5.7" viewBox="0 0 8.4 5.7"><path d="M0 0H8.4 L4.2 5.7Z" fill="#6a6a6a"/></svg><div style="left:1038px;top:737.5px;width:98px;height:25.5px;background:#969696;border:1px solid #1f1f1f;box-sizing:border-box;box-shadow:inset 0 0 0 1.800px #2d2d2d;"></div><div style="left:1135px;top:737.5px;width:28px;height:25.5px;background:linear-gradient(#404040,#333333);border:1px solid #1f1f1f;box-sizing:border-box;box-shadow:inset 0 1px 0 rgba(255,255,255,.06);"></div><svg style="left:1145px;top:746.65px;" width="9.6" height="7.5" viewBox="0 0 9.6 7.5"><path d="M0 0H9.6 L4.8 7.5Z" fill="#707070"/></svg><span style="left:949.5px;top:817.53px;font-size:17.8px;line-height:17.8px;color:#e4e4e4;white-space:pre;letter-spacing:0.63px;">Offset:</span><div style="left:1013px;top:811px;width:23.5px;height:13.75px;background:linear-gradient(#404040,#333333);border:1px solid #1f1f1f;box-sizing:border-box;box-shadow:inset 0 1px 0 rgba(255,255,255,.06);"></div><div style="left:1013px;top:823.75px;width:23.5px;height:13.75px;background:linear-gradient(#404040,#333333);border:1px solid #1f1f1f;box-sizing:border-box;box-shadow:inset 0 1px 0 rgba(255,255,255,.06);"></div><svg style="left:1020.55px;top:815.3px;" width="8.4" height="5.7" viewBox="0 0 8.4 5.7"><path d="M0 5.7 H8.4 L4.2 0Z" fill="#e2e2e2"/></svg><svg style="left:1020.55px;top:827.5px;" width="8.4" height="5.7" viewBox="0 0 8.4 5.7"><path d="M0 0H8.4 L4.2 5.7Z" fill="#e2e2e2"/></svg><div style="left:1038.5px;top:811px;width:124px;height:26.5px;background:#b6b6b6;border:1px solid #1f1f1f;box-sizing:border-box;box-shadow:inset 0 1px 1px rgba(0,0,0,.18);"></div><span style="left:1043px;top:817.03px;font-size:17.8px;line-height:17.8px;color:#000;white-space:pre;letter-spacing:0.67px;">0.125 in</span><span style="left:898px;top:854.53px;font-size:17.8px;line-height:17.8px;color:#e4e4e4;white-space:pre;letter-spacing:0.54px;">Right Indent:</span><div style="left:1013px;top:848px;width:23.5px;height:13.75px;background:linear-gradient(#404040,#333333);border:1px solid #1f1f1f;box-sizing:border-box;box-shadow:inset 0 1px 0 rgba(255,255,255,.06);"></div><div style="left:1013px;top:860.75px;width:23.5px;height:13.75px;background:linear-gradient(#404040,#333333);border:1px solid #1f1f1f;box-sizing:border-box;box-shadow:inset 0 1px 0 rgba(255,255,255,.06);"></div><svg style="left:1020.55px;top:852.3px;" width="8.4" height="5.7" viewBox="0 0 8.4 5.7"><path d="M0 5.7 H8.4 L4.2 0Z" fill="#e2e2e2"/></svg><svg style="left:1020.55px;top:864.5px;" width="8.4" height="5.7" viewBox="0 0 8.4 5.7"><path d="M0 0H8.4 L4.2 5.7Z" fill="#e2e2e2"/></svg><div style="left:1038.5px;top:848px;width:124px;height:26.5px;background:#b6b6b6;border:1px solid #1f1f1f;box-sizing:border-box;box-shadow:inset 0 1px 1px rgba(0,0,0,.18);"></div><span style="left:1043px;top:853.53px;font-size:17.8px;line-height:17.8px;color:#000;white-space:pre;letter-spacing:0.43px;">0 in</span><div style="left:529px;top:976px;width:17px;height:16.5px;background:linear-gradient(#2a2a2a,#303030);border:1px solid #1c1c1c;box-sizing:border-box;box-shadow:0 1px 0 rgba(255,255,255,.07);"></div><svg style="left:529px;top:972px;" width="21" height="20.5" viewBox="0 0 21 20.5"><path d="M3.800 10.600L8 15.800L16.600 3.600" fill="none" stroke="#e8e8e8" stroke-width="2.100"/></svg><span style="left:552px;top:978.03px;font-size:17.8px;line-height:17.8px;color:#e4e4e4;white-space:pre;letter-spacing:-0.3px;">Preview</span><div style="left:925px;top:971.5px;width:124.5px;height:26.5px;background:linear-gradient(#464646,#393939);border:1px solid #1b1b1b;box-sizing:border-box;box-shadow:inset 0 1px 0 rgba(255,255,255,.09);"></div><span style="left:959.5px;top:978.03px;font-size:17.8px;line-height:17.8px;color:#e4e4e4;white-space:pre;letter-spacing:-0.18px;">Cancel</span><div style="left:1065px;top:969px;width:127.5px;height:30px;background:linear-gradient(#464646,#393939);border:2.500px solid #151515;box-sizing:border-box;box-shadow:inset 0 1px 0 rgba(255,255,255,.09);"></div><span style="left:1116.5px;top:978.03px;font-size:17.8px;line-height:17.8px;color:#e4e4e4;white-space:pre;letter-spacing:-2.22px;">OK</span><div style="left:513px;top:550.3px;width:286.5px;height:59.7px;border:6px solid #f1945a;box-sizing:border-box;border-radius:1.500px;background:rgba(0,0,0,.13);box-shadow:0 0 2px #f1945a, inset 0 0 2px #f1945a;"></div><div style="left:1210.9px;top:120px;width:58.1px;height:50px;border:6px solid #f1945a;box-sizing:border-box;border-radius:1.500px;box-shadow:0 0 2px #f1945a, inset 0 0 2px #f1945a;"></div></div></body></html>
